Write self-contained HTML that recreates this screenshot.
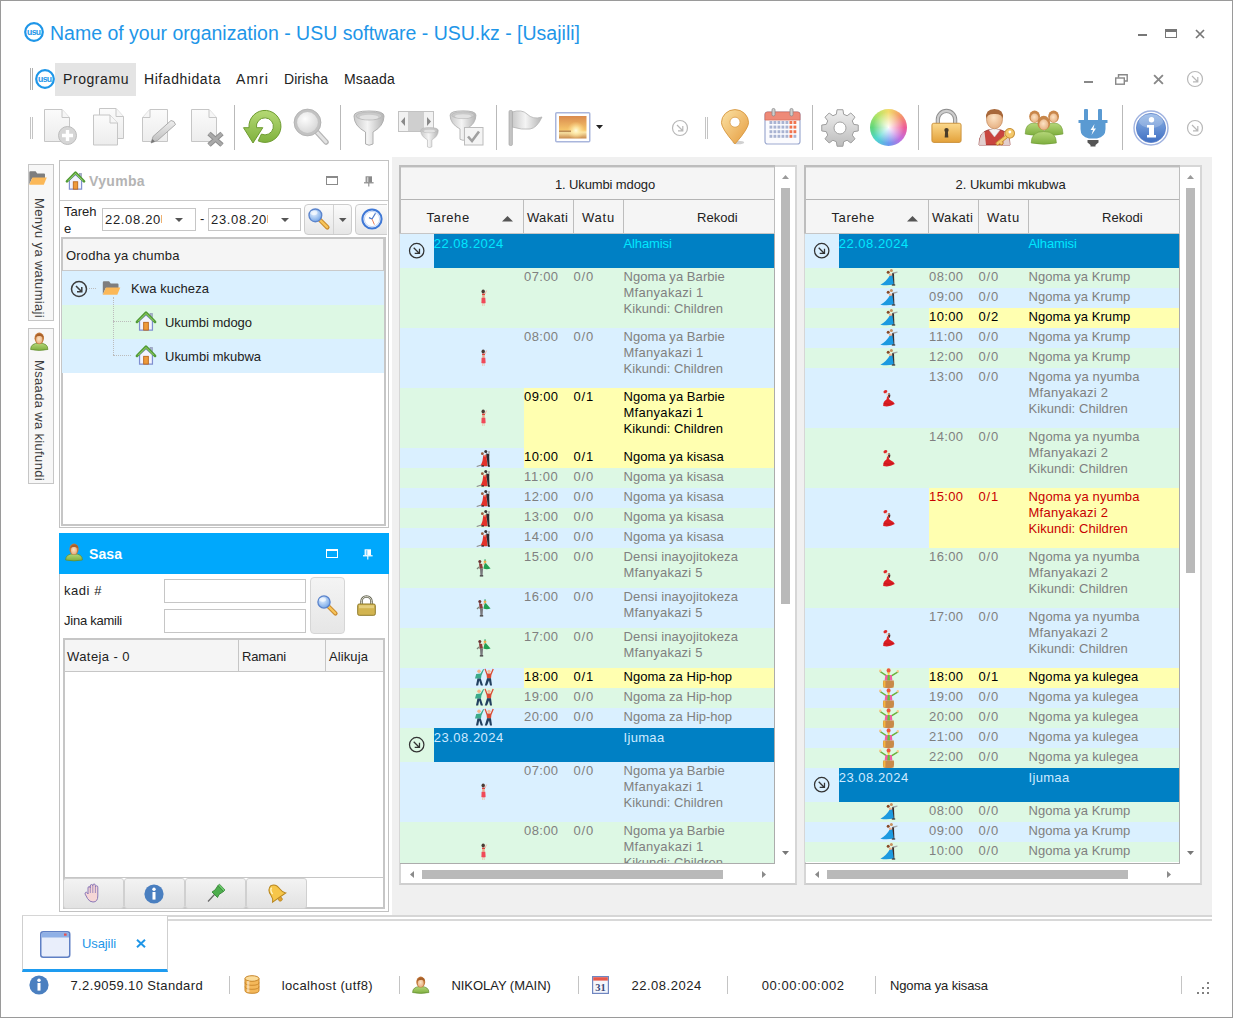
<!DOCTYPE html>
<html><head><meta charset="utf-8"><title>USU</title>
<style>
html,body{margin:0;padding:0;}
body{width:1233px;height:1018px;position:relative;overflow:hidden;background:#fff;font-family:"Liberation Sans", sans-serif;font-size:13px;color:#000;}
div{box-sizing:border-box;}
svg{position:absolute;overflow:visible;}
</style></head><body>
<svg width="0" height="0" style="left:0;top:0"><defs>
<linearGradient id="gPage" x1="0" y1="0" x2="0" y2="1"><stop offset="0" stop-color="#fbfbfb"/><stop offset="1" stop-color="#ececec"/></linearGradient>
<linearGradient id="gGray" x1="0" y1="0" x2="1" y2="0"><stop offset="0" stop-color="#c9c9c9"/><stop offset="0.45" stop-color="#f4f4f4"/><stop offset="1" stop-color="#b4b4b4"/></linearGradient>
<linearGradient id="gGrayV" x1="0" y1="0" x2="0" y2="1"><stop offset="0" stop-color="#efefef"/><stop offset="1" stop-color="#bcbcbc"/></linearGradient>
<linearGradient id="gGreen" x1="0" y1="0" x2="0" y2="1"><stop offset="0" stop-color="#b5d975"/><stop offset="1" stop-color="#7fb13d"/></linearGradient>
<linearGradient id="gGold" x1="0" y1="0" x2="0" y2="1"><stop offset="0" stop-color="#fbd98d"/><stop offset="1" stop-color="#e3a13a"/></linearGradient>
<linearGradient id="gPin" x1="0" y1="0" x2="1" y2="1"><stop offset="0" stop-color="#fbe3a6"/><stop offset="1" stop-color="#e59a3c"/></linearGradient>
<linearGradient id="gBlue" x1="0" y1="0" x2="0" y2="1"><stop offset="0" stop-color="#8fb4e6"/><stop offset="1" stop-color="#3f6fc2"/></linearGradient>
<linearGradient id="gSun" x1="0" y1="0" x2="0" y2="1"><stop offset="0" stop-color="#d98a4e"/><stop offset="0.62" stop-color="#f6c56a"/><stop offset="0.72" stop-color="#fbe6a8"/><stop offset="1" stop-color="#c98a4c"/></linearGradient>
<linearGradient id="gBtn" x1="0" y1="0" x2="0" y2="1"><stop offset="0" stop-color="#f8f8f8"/><stop offset="1" stop-color="#e2e2e2"/></linearGradient>
<radialGradient id="gLens" cx="0.4" cy="0.35" r="0.7"><stop offset="0" stop-color="#fdfdfd"/><stop offset="1" stop-color="#d2d2d2"/></radialGradient>
<radialGradient id="gLensB" cx="0.4" cy="0.35" r="0.7"><stop offset="0" stop-color="#e6f2ff"/><stop offset="1" stop-color="#6fa2e6"/></radialGradient>
<radialGradient id="gHead" cx="0.45" cy="0.4" r="0.7"><stop offset="0" stop-color="#fde3c4"/><stop offset="1" stop-color="#e2a878"/></radialGradient>
<linearGradient id="gBodyG" x1="0" y1="0" x2="0" y2="1"><stop offset="0" stop-color="#b6d77a"/><stop offset="1" stop-color="#7eae3e"/></linearGradient>
<radialGradient id="gGlow"><stop offset="0" stop-color="#fffbe0" stop-opacity="1"/><stop offset="0.35" stop-color="#ffeeb0" stop-opacity="0.8"/><stop offset="1" stop-color="#ffd888" stop-opacity="0"/></radialGradient>
<filter id="fB" x="-10%" y="-10%" width="120%" height="120%"><feGaussianBlur stdDeviation="0.35"/></filter>
</defs></svg>
<div style="position:absolute;left:0px;top:0px;width:1233px;height:1018px;border:1px solid #9a9a9a;background:#fff;"></div>
<div style="position:absolute;left:392px;top:157px;width:820px;height:760px;background:#f0f0f0;"></div>
<svg style="left:24px;top:22px" width="20" height="20" viewBox="0 0 20 20"><circle cx="10" cy="10" r="8.8" fill="#fff" stroke="#1e96e8" stroke-width="2.2"/><text x="9.7" y="13" font-family='"Liberation Sans", sans-serif' font-size="8.6" font-weight="bold" text-anchor="middle" fill="#1e96e8" letter-spacing="-0.7">usu</text></svg>
<div style="position:absolute;left:50px;top:19px;font-size:19.5px;line-height:28px;color:#1e96e8;white-space:pre;letter-spacing:0.001px;">Name of your organization - USU software - USU.kz - [Usajili]</div>
<div style="position:absolute;left:1138px;top:34px;width:9px;height:2px;background:#777;"></div>
<div style="position:absolute;left:1165px;top:29px;width:12px;height:9px;border:1px solid #777;border-top:3px solid #777;"></div>
<svg style="left:1195px;top:29px" width="10" height="10" viewBox="0 0 10 10"><path d="M1 1 L9 9 M9 1 L1 9" stroke="#777" stroke-width="1.7" fill="none"/></svg>
<div style="position:absolute;left:30px;top:68px;width:1px;height:22px;background:#b0b0b0;"></div>
<div style="position:absolute;left:32px;top:68px;width:1px;height:22px;background:#b0b0b0;"></div>
<svg style="left:35px;top:69px" width="20" height="20" viewBox="0 0 20 20"><circle cx="10" cy="10" r="8.8" fill="#fff" stroke="#1e96e8" stroke-width="2.2"/><text x="9.7" y="13" font-family='"Liberation Sans", sans-serif' font-size="8.6" font-weight="bold" text-anchor="middle" fill="#1e96e8" letter-spacing="-0.7">usu</text></svg>
<div style="position:absolute;left:55px;top:63px;width:81px;height:33px;background:#e4e4e4;"></div>
<div style="position:absolute;left:63px;top:70px;font-size:14px;line-height:18px;color:#222;white-space:pre;letter-spacing:0.566px;">Programu</div>
<div style="position:absolute;left:144px;top:70px;font-size:14px;line-height:18px;color:#222;white-space:pre;letter-spacing:0.561px;">Hifadhidata</div>
<div style="position:absolute;left:236px;top:70px;font-size:14px;line-height:18px;color:#222;white-space:pre;letter-spacing:1.055px;">Amri</div>
<div style="position:absolute;left:284px;top:70px;font-size:14px;line-height:18px;color:#222;white-space:pre;letter-spacing:0.060px;">Dirisha</div>
<div style="position:absolute;left:344px;top:70px;font-size:14px;line-height:18px;color:#222;white-space:pre;letter-spacing:0.198px;">Msaada</div>
<div style="position:absolute;left:1084px;top:81px;width:9px;height:2px;background:#888;"></div>
<svg style="left:1115px;top:74px" width="13" height="11" viewBox="0 0 13 11"><path d="M3.5 3.5 V0.8 H12.2 V7 H9.5" fill="none" stroke="#888" stroke-width="1.4"/><rect x="0.7" y="4" width="8.6" height="6.2" fill="#fff" stroke="#888" stroke-width="1.4"/></svg>
<svg style="left:1153px;top:74px" width="11" height="11" viewBox="0 0 10 10"><path d="M1 1 L9 9 M9 1 L1 9" stroke="#888" stroke-width="1.7" fill="none"/></svg>
<svg style="left:1186px;top:70px" width="18" height="18" viewBox="0 0 18 18"><circle cx="9" cy="9" r="7.5" fill="none" stroke="#b8b8b8" stroke-width="1.2"/><path d="M6 6 L11.5 11.5 M7 11.8 H11.8 V7" fill="none" stroke="#b8b8b8" stroke-width="1.2"/></svg>
<div style="position:absolute;left:30px;top:117px;width:1px;height:22px;background:#c4c4c4;"></div>
<div style="position:absolute;left:32px;top:117px;width:1px;height:22px;background:#c4c4c4;"></div>
<svg style="left:44px;top:109px" width="36" height="38" viewBox="0 0 36 38"><path d="M0.5 0.5 H18 L25.5 8.5 V32.5 H0.5 Z" fill="url(#gPage)" stroke="#c6c6c6" stroke-width="1"/><path d="M18 0.5 V8.5 H25.5" fill="#f6f6f6" stroke="#c6c6c6" stroke-width="1"/><circle cx="23.5" cy="26.5" r="9" fill="#d6d6d6" stroke="#bdbdbd"/><path d="M23.5 21 V32 M18 26.5 H29" stroke="#fff" stroke-width="3.4"/></svg>
<svg style="left:93px;top:107.5px" width="32" height="38" viewBox="0 0 32 38"><g transform="translate(6,0)"><path d="M0.5 0.5 H17 L24.5 8.5 V30.5 H0.5 Z" fill="url(#gPage)" stroke="#c6c6c6" stroke-width="1"/><path d="M17 0.5 V8.5 H24.5" fill="#f6f6f6" stroke="#c6c6c6" stroke-width="1"/></g><g transform="translate(0,6.5)"><path d="M0.5 0.5 H17 L24.5 8.5 V30.5 H0.5 Z" fill="url(#gPage)" stroke="#c6c6c6" stroke-width="1"/><path d="M17 0.5 V8.5 H24.5" fill="#f6f6f6" stroke="#c6c6c6" stroke-width="1"/></g></svg>
<svg style="left:142px;top:109px" width="36" height="38" viewBox="0 0 36 38"><path d="M8 0.5 H25.5 V32.5 H0.5 V8.5 Z" fill="url(#gPage)" stroke="#c6c6c6"/><path d="M8 0.5 V8.5 H0.5" fill="#f6f6f6" stroke="#c6c6c6"/><path d="M9 34 L11 27.5 L29 11.5 Q32.5 11.5 33.5 15.5 L15.5 31.5 Z" fill="url(#gGrayV)" stroke="#9c9c9c" stroke-width="0.8"/><path d="M9 34 L10.3 30 L13 32.6 Z" fill="#777"/></svg>
<svg style="left:191px;top:109px" width="36" height="38" viewBox="0 0 36 38"><path d="M0.5 0.5 H18 L25.5 8.5 V32.5 H0.5 Z" fill="url(#gPage)" stroke="#c6c6c6" stroke-width="1"/><path d="M18 0.5 V8.5 H25.5" fill="#f6f6f6" stroke="#c6c6c6" stroke-width="1"/><path d="M18 24.5 L31 36 M31 24.5 L18 36" stroke="#8e8e8e" stroke-width="5"/><path d="M18 24.5 L31 36 M31 24.5 L18 36" stroke="#a9a9a9" stroke-width="3"/></svg>
<div style="position:absolute;left:234px;top:105px;width:1px;height:45px;background:#b9b9b9;"></div>
<svg style="left:243px;top:110px" width="40" height="36" viewBox="0 0 40 36"><path d="M6 17.7 A16 16 0 1 1 15.2 30.9 L18.4 24.1 A8.5 8.5 0 1 0 13.5 17.7 L19.8 17.7 L10 33 L0.5 17.7 Z" fill="url(#gGreen)" stroke="#6e9c30" stroke-width="1" stroke-linejoin="round"/></svg>
<svg style="left:293px;top:108px" width="38" height="38" viewBox="0 0 38 38"><path d="M22 22 L33 34" stroke="#b5b5b5" stroke-width="5.5" stroke-linecap="round"/><path d="M22 22 L33 34" stroke="#e2e2e2" stroke-width="3" stroke-linecap="round"/><circle cx="14.5" cy="14.5" r="12" fill="url(#gLens)" stroke="#c2c2c2" stroke-width="3.2"/><circle cx="14.5" cy="14.5" r="13.4" fill="none" stroke="#b0b0b0" stroke-width="0.8"/></svg>
<div style="position:absolute;left:340px;top:105px;width:1px;height:45px;background:#b9b9b9;"></div>
<svg style="left:353px;top:109.5px" width="32" height="36" viewBox="0 0 32 36"><path d="M1 6 Q1 1 16 1 Q31 1 31 6 Q31 16 20 22 V34 Q16 36.5 12.5 34 V22 Q1 16 1 6 Z" fill="url(#gGray)" stroke="#b0b0b0" stroke-width="1"/><ellipse cx="16" cy="6" rx="13" ry="4" fill="#cacaca" stroke="#b4b4b4" stroke-width="0.8"/><ellipse cx="16" cy="7.2" rx="9.5" ry="2.4" fill="#e2e2e2"/></svg>
<svg style="left:398px;top:111px" width="40" height="22" viewBox="0 0 40 22"><rect x="0.5" y="0.5" width="35" height="20" fill="#f2f2f2" stroke="#c2c2c2"/><rect x="10" y="1" width="16" height="19" fill="#cfcfcf"/><path d="M7 6 V15 L3 10.5 Z M29 6 V15 L33 10.5 Z" fill="#8a8a8a"/></svg>
<svg style="left:420px;top:127px" width="19" height="21" viewBox="0 0 32 36"><path d="M1 6 Q1 1 16 1 Q31 1 31 6 Q31 16 20 22 V34 Q16 36.5 12.5 34 V22 Q1 16 1 6 Z" fill="url(#gGray)" stroke="#b0b0b0" stroke-width="1"/><ellipse cx="16" cy="6" rx="13" ry="4" fill="#cacaca" stroke="#b4b4b4" stroke-width="0.8"/><ellipse cx="16" cy="7.2" rx="9.5" ry="2.4" fill="#e2e2e2"/></svg>
<svg style="left:449px;top:109.5px" width="28" height="31" viewBox="0 0 32 36"><path d="M1 6 Q1 1 16 1 Q31 1 31 6 Q31 16 20 22 V34 Q16 36.5 12.5 34 V22 Q1 16 1 6 Z" fill="url(#gGray)" stroke="#b0b0b0" stroke-width="1"/><ellipse cx="16" cy="6" rx="13" ry="4" fill="#cacaca" stroke="#b4b4b4" stroke-width="0.8"/><ellipse cx="16" cy="7.2" rx="9.5" ry="2.4" fill="#e2e2e2"/></svg>
<svg style="left:464px;top:126.5px" width="20" height="19" viewBox="0 0 20 19"><rect x="0.5" y="0.5" width="18.5" height="17.5" fill="#f4f4f4" stroke="#bcbcbc"/><path d="M4 9.5 L8 14 L15 4.5" fill="none" stroke="#a0a0a0" stroke-width="2.6"/></svg>
<div style="position:absolute;left:496px;top:105px;width:1px;height:45px;background:#b9b9b9;"></div>
<svg style="left:508px;top:110px" width="36" height="36" viewBox="0 0 36 36"><path d="M4 2 Q14 -1 19 4 Q25 10 34 7 Q29 18 22 19 Q14 20 4 17 Z" fill="url(#gGray)" stroke="#b4b4b4" stroke-width="0.8"/><rect x="1" y="0.5" width="3.4" height="35" rx="1.2" fill="#c4c4c4" stroke="#a8a8a8" stroke-width="0.7"/></svg>
<svg style="left:555px;top:112px" width="36" height="31" viewBox="0 0 36 31"><rect x="0.75" y="0.75" width="34" height="29" rx="1" fill="#fff" stroke="#a9b6dc" stroke-width="1.5"/><rect x="4" y="4" width="27.5" height="22.5" fill="url(#gSun)"/><circle cx="21" cy="18.5" r="9" fill="url(#gGlow)"/><rect x="4" y="18.5" width="12" height="1.6" fill="#a06a3a" opacity="0.7"/></svg>
<svg style="left:596px;top:124.5px" width="7" height="4" viewBox="0 0 7 4"><path d="M0 0 H7 L3.5 4 Z" fill="#222"/></svg>
<svg style="left:671px;top:119px" width="18" height="18" viewBox="0 0 18 18"><circle cx="9" cy="9" r="7.5" fill="none" stroke="#b8b8b8" stroke-width="1.2"/><path d="M6 6 L11.5 11.5 M7 11.8 H11.8 V7" fill="none" stroke="#b8b8b8" stroke-width="1.2"/></svg>
<div style="position:absolute;left:705px;top:117px;width:1px;height:22px;background:#c4c4c4;"></div>
<div style="position:absolute;left:707px;top:117px;width:1px;height:22px;background:#c4c4c4;"></div>
<svg style="left:720px;top:110px" width="30" height="35" viewBox="0 0 31 36"><ellipse cx="19" cy="33.5" rx="6" ry="1.8" fill="#000" opacity="0.18"/><path d="M15.5 35 Q1.5 19 1.5 13 A14 13.5 0 0 1 29.5 13 Q29.5 19 15.5 35 Z" fill="url(#gPin)" stroke="#d89a45" stroke-width="1"/><circle cx="15.5" cy="12.5" r="5.2" fill="#fff" stroke="#d89a45" stroke-width="0.8"/></svg>
<svg style="left:764px;top:108px" width="38" height="37" viewBox="0 0 38 37"><rect x="1" y="4" width="35" height="32" rx="2.5" fill="#fbfbfe" stroke="#9daad0" stroke-width="1.2"/><path d="M1 12 V6.5 Q1 4 3.5 4 H33.5 Q36 4 36 6.5 V12 Z" fill="#ee8a78" stroke="#d9705e" stroke-width="0.8"/><rect x="5.5" y="13.0" width="2.8" height="3" fill="#a9b3d2"/><rect x="9.5" y="13.0" width="2.8" height="3" fill="#a9b3d2"/><rect x="13.5" y="13.0" width="2.8" height="3" fill="#a9b3d2"/><rect x="17.5" y="13.0" width="2.8" height="3" fill="#a9b3d2"/><rect x="21.5" y="13.0" width="2.8" height="3" fill="#a9b3d2"/><rect x="25.5" y="13.0" width="2.8" height="3" fill="#f0734f"/><rect x="29.5" y="13.0" width="2.8" height="3" fill="#f0734f"/><rect x="5.5" y="17.6" width="2.8" height="3" fill="#a9b3d2"/><rect x="9.5" y="17.6" width="2.8" height="3" fill="#a9b3d2"/><rect x="13.5" y="17.6" width="2.8" height="3" fill="#a9b3d2"/><rect x="17.5" y="17.6" width="2.8" height="3" fill="#a9b3d2"/><rect x="21.5" y="17.6" width="2.8" height="3" fill="#a9b3d2"/><rect x="25.5" y="17.6" width="2.8" height="3" fill="#f0734f"/><rect x="29.5" y="17.6" width="2.8" height="3" fill="#f0734f"/><rect x="5.5" y="22.2" width="2.8" height="3" fill="#a9b3d2"/><rect x="9.5" y="22.2" width="2.8" height="3" fill="#a9b3d2"/><rect x="13.5" y="22.2" width="2.8" height="3" fill="#a9b3d2"/><rect x="17.5" y="22.2" width="2.8" height="3" fill="#a9b3d2"/><rect x="21.5" y="22.2" width="2.8" height="3" fill="#a9b3d2"/><rect x="25.5" y="22.2" width="2.8" height="3" fill="#f0734f"/><rect x="29.5" y="22.2" width="2.8" height="3" fill="#f0734f"/><rect x="5.5" y="26.799999999999997" width="2.8" height="3" fill="#a9b3d2"/><rect x="9.5" y="26.799999999999997" width="2.8" height="3" fill="#a9b3d2"/><rect x="13.5" y="26.799999999999997" width="2.8" height="3" fill="#a9b3d2"/><rect x="17.5" y="26.799999999999997" width="2.8" height="3" fill="#a9b3d2"/><rect x="21.5" y="26.799999999999997" width="2.8" height="3" fill="#a9b3d2"/><rect x="25.5" y="26.799999999999997" width="2.8" height="3" fill="#f0734f"/><rect x="29.5" y="26.799999999999997" width="2.8" height="3" fill="#a9b3d2"/><rect x="8" y="0.5" width="3" height="7.5" rx="1.4" fill="#cfcfcf" stroke="#8a8a8a" stroke-width="0.8"/><rect x="26" y="0.5" width="3" height="7.5" rx="1.4" fill="#cfcfcf" stroke="#8a8a8a" stroke-width="0.8"/></svg>
<div style="position:absolute;left:812px;top:105px;width:1px;height:45px;background:#b9b9b9;"></div>
<svg style="left:821px;top:109px" width="38" height="38" viewBox="0 0 38 38"><path d="M15.35 5.28 L16.05 0.74 L21.95 0.74 L22.65 5.28 L26.12 6.72 L29.83 4.00 L34.00 8.17 L31.28 11.88 L32.72 15.35 L37.26 16.05 L37.26 21.95 L32.72 22.65 L31.28 26.12 L34.00 29.83 L29.83 34.00 L26.12 31.28 L22.65 32.72 L21.95 37.26 L16.05 37.26 L15.35 32.72 L11.88 31.28 L8.17 34.00 L4.00 29.83 L6.72 26.12 L5.28 22.65 L0.74 21.95 L0.74 16.05 L5.28 15.35 L6.72 11.88 L4.00 8.17 L8.17 4.00 L11.88 6.72 Z" fill="url(#gGrayV)" stroke="#9e9e9e" stroke-width="1" stroke-linejoin="round"/><circle cx="19" cy="19" r="6" fill="#fff" stroke="#a4a4a4" stroke-width="1"/></svg>
<div style="position:absolute;left:870px;top:109px;width:37px;height:37px;border-radius:50%;background:radial-gradient(circle at 50% 50%, rgba(255,255,255,0.95) 0%, rgba(255,255,255,0.55) 26%, rgba(255,255,255,0) 60%),conic-gradient(from 0deg,#f2dc6a,#f49a6a,#ee5c98,#c070e0,#6a9af0,#50d6d0,#5fd67a,#b0e468,#f2dc6a);"></div>
<div style="position:absolute;left:918px;top:105px;width:1px;height:45px;background:#b9b9b9;"></div>
<svg style="left:931px;top:108px" width="31" height="36" viewBox="0 0 34 37"><path d="M7.5 16 V11.5 A9.5 9.5 0 0 1 26.5 11.5 V16" fill="none" stroke="#8e8e8e" stroke-width="4.6"/><path d="M7.5 16 V11.5 A9.5 9.5 0 0 1 26.5 11.5 V16" fill="none" stroke="#cdcdcd" stroke-width="2.6"/><rect x="1" y="15.5" width="32" height="21" rx="2" fill="url(#gGold)" stroke="#c98e36" stroke-width="1"/><circle cx="17" cy="23" r="2.4" fill="#4a3c28"/><path d="M15.6 23 H18.4 L19 31 H15 Z" fill="#4a3c28"/></svg>
<svg style="left:978px;top:108px" width="40" height="38" viewBox="0 0 40 38"><path d="M1 37 Q1 24 10 22 L16.5 21 L23 22 Q32 24 32 37 Z" fill="#c9453f" stroke="#8e2f2c" stroke-width="0.8"/><path d="M11 22 L16.5 29 L22 22 L16.5 20.5 Z" fill="#f4f4f4" stroke="#c9c9c9" stroke-width="0.5"/><path d="M1 37 Q1.5 26 6.5 23.5 L8 37 Z M32 37 Q31.5 26 26.5 23.5 L25 37 Z" fill="#e8e8e8" opacity="0.85"/><ellipse cx="16.5" cy="11.5" rx="8" ry="9.3" fill="url(#gHead)" stroke="#c48a5c" stroke-width="0.7"/><path d="M8 11 Q7 1 16.5 1 Q26 1 25 11 Q23.5 5.5 16.5 6 Q9.5 5.5 8 11 Z" fill="#a8683a"/><g transform="translate(21,22) rotate(-38 8 8)"><circle cx="13" cy="6" r="4.8" fill="#f4c86a" stroke="#c8923a" stroke-width="1"/><circle cx="14" cy="5" r="1.4" fill="#fff"/><path d="M8.5 5 H-4 V8 H-1 V10 H2 V8 H8.5 Z" fill="#f4c86a" stroke="#c8923a" stroke-width="0.9"/></g></svg>
<svg style="left:1025px;top:109.5px" width="40" height="36" viewBox="0 0 40 36"><path d="M0.1999999999999993 24 Q0.1999999999999993 13.0 9.6 13.0 Q19.0 13.0 19.0 24 Q9.6 26.5 0.1999999999999993 24 Z" fill="url(#gBodyG)" stroke="#6f9a35" stroke-width="0.6"/><ellipse cx="9.6" cy="6.6" rx="5.4" ry="6.048000000000001" fill="#c8864a"/><ellipse cx="9.6" cy="7.949999999999999" rx="3.888" ry="4.428" fill="url(#gHead)"/><path d="M19.200000000000003 24 Q19.200000000000003 13.0 28.6 13.0 Q38.0 13.0 38.0 24 Q28.6 26.5 19.200000000000003 24 Z" fill="url(#gBodyG)" stroke="#6f9a35" stroke-width="0.6"/><ellipse cx="28.6" cy="6.6" rx="5.4" ry="6.048000000000001" fill="#c8864a"/><ellipse cx="28.6" cy="7.949999999999999" rx="3.888" ry="4.428" fill="url(#gHead)"/><path d="M6.200000000000001 33 Q6.200000000000001 21.5 18.8 21.5 Q31.4 21.5 31.4 33 Q18.8 35.5 6.200000000000001 33 Z" fill="url(#gBodyG)" stroke="#6f9a35" stroke-width="0.6"/><ellipse cx="18.8" cy="13" rx="6.4" ry="7.168000000000001" fill="#c8864a"/><ellipse cx="18.8" cy="14.6" rx="4.608" ry="5.248" fill="url(#gHead)"/></svg>
<svg style="left:1078px;top:109px" width="30" height="38" viewBox="0 0 30 38"><rect x="6" y="0" width="4" height="13" rx="1" fill="#5a9ad2"/><rect x="20" y="0" width="4" height="13" rx="1" fill="#5a9ad2"/><path d="M0.5 11 H29.5 V14 H27.5 V20 Q27.5 28 19 29.5 H11 Q2.5 28 2.5 20 V14 H0.5 Z" fill="#5a9ad2"/><path d="M16.5 15 L12.5 21 H15 L13.5 26 L18 19.5 H15.5 Z" fill="#fff"/><path d="M9.5 31 H20.5 V33.5 L17.5 36 V37.5 H12.5 V36 L9.5 33.5 Z" fill="#555"/></svg>
<div style="position:absolute;left:1122px;top:105px;width:1px;height:45px;background:#b9b9b9;"></div>
<svg style="left:1133px;top:110px" width="36" height="36" viewBox="0 0 36 36"><circle cx="18" cy="18" r="17" fill="#fff" stroke="#9fb2e0" stroke-width="1.4"/><circle cx="18" cy="18" r="14.6" fill="url(#gBlue)" stroke="#5a7fc8" stroke-width="0.8"/><ellipse cx="18" cy="11" rx="12" ry="7" fill="#fff" opacity="0.22"/><circle cx="18.5" cy="9.8" r="2.7" fill="#fff"/><path d="M14 15 H21 V25 H23 V27.5 H14 V25 H16 V17.5 H14 Z" fill="#fff"/></svg>
<svg style="left:1186px;top:119px" width="18" height="18" viewBox="0 0 18 18"><circle cx="9" cy="9" r="7.5" fill="none" stroke="#b8b8b8" stroke-width="1.2"/><path d="M6 6 L11.5 11.5 M7 11.8 H11.8 V7" fill="none" stroke="#b8b8b8" stroke-width="1.2"/></svg>
<div style="position:absolute;left:28px;top:164px;width:26px;height:157px;border:1px solid #c6c6c6;background:#f7f7f7;"></div>
<svg style="left:29px;top:171px" width="18" height="14" viewBox="0 0 18 14"><path d="M0.3 13.5 V1.4 Q0.3 0.3 1.4 0.3 H6.6 L8.2 2.4 H15 Q16 2.4 16 3.4 V7 H3.2 Z" fill="#7e7e7e"/><path d="M0.3 13.7 L3.4 6.6 H17.8 L14.8 13.7 Z" fill="#fbb858"/></svg>
<div style="position:absolute;left:47px;top:198px;font-size:13px;line-height:16px;color:#3c3c3c;white-space:pre;letter-spacing:0.325px;transform-origin:0 0;transform:rotate(90deg);">Menyu ya watumiaji</div>
<div style="position:absolute;left:28px;top:328px;width:26px;height:156px;border:1px solid #c6c6c6;background:#f7f7f7;"></div>
<svg style="left:30px;top:331.5px" width="18.5" height="18.5" viewBox="0 0 18 18"><path d="M0.6 17 Q0.6 10.8 9 10.8 Q17.4 10.8 17.4 17 Q9 18.8 0.6 17 Z" fill="url(#gBodyG)" stroke="#5f8a2c" stroke-width="0.7"/><ellipse cx="9" cy="6.2" rx="4.6" ry="5.6" fill="#c47a3c"/><ellipse cx="9" cy="7.4" rx="3" ry="3.9" fill="url(#gHead)"/><path d="M5 5.4 Q6 1.4 9.4 1.6 Q13 1.8 13.4 5.6 Q11.4 3.6 9 4 Q6.4 4 5 5.4 Z" fill="#a8602a"/></svg>
<div style="position:absolute;left:47px;top:359.5px;font-size:13px;line-height:16px;color:#3c3c3c;white-space:pre;letter-spacing:0.339px;transform-origin:0 0;transform:rotate(90deg);">Msaada wa kiufundi</div>
<div style="position:absolute;left:59px;top:160px;width:330px;height:368px;border:1px solid #c2c2c2;background:#fff;"></div>
<div style="position:absolute;left:60px;top:200px;width:328px;height:1px;background:#c8c8c8;"></div>
<svg style="left:66px;top:171px" width="19" height="19" viewBox="0 0 18 18"><path d="M3.2 8.6 V17.2 H14.8 V8.6 L9 3.4 Z" fill="#f2f3fd" stroke="#7f8fd0" stroke-width="1.1"/><rect x="6.9" y="10.2" width="4.2" height="7" fill="#ee9a3a" stroke="#b8641a" stroke-width="0.8"/><rect x="12.6" y="2.2" width="2.2" height="4.6" fill="#a9b2cc" stroke="#8890b0" stroke-width="0.5"/><path d="M0.9 9.8 L9 1.5 L17.1 9.8" fill="none" stroke="#4f9a34" stroke-width="2.5" stroke-linejoin="round" stroke-linecap="round"/><path d="M2 9.2 L9 2.2 L16 9.2" fill="none" stroke="#a6d872" stroke-width="0.9"/></svg>
<div style="position:absolute;left:89px;top:172px;font-size:14px;line-height:18px;color:#b4b4b4;white-space:pre;font-weight:bold;letter-spacing:0.341px;">Vyumba</div>
<div style="position:absolute;left:326px;top:176px;width:12px;height:9px;border:1px solid #8a8a8a;border-top:2px solid #8a8a8a;"></div>
<svg style="left:363.8px;top:176.2px" width="10" height="11" viewBox="0 0 10 11"><rect x="1.6" y="0.3" width="6.4" height="6.2" fill="#8a8a8a"/><rect x="2.8" y="1.2" width="1.6" height="5" fill="#d0d0d0"/><path d="M0 6.8 H9.6" stroke="#8a8a8a" stroke-width="1.2"/><path d="M4.8 7 V10.6" stroke="#8a8a8a" stroke-width="1.1"/></svg>
<div style="position:absolute;left:64px;top:204px;font-size:13px;line-height:16px;color:#222;white-space:pre;">Tareh</div>
<div style="position:absolute;left:64px;top:221px;font-size:13px;line-height:16px;color:#222;white-space:pre;">e</div>
<div style="position:absolute;left:102px;top:208px;width:94px;height:23px;border:1px solid #c6c6c6;background:#fff;"></div>
<div style="position:absolute;left:105px;top:212px;font-size:13px;line-height:16px;color:#222;white-space:pre;letter-spacing:0.674px;">22.08.20</div>
<svg style="left:175px;top:218px" width="8" height="4" viewBox="0 0 8 4"><path d="M0 0 H8 L4 4 Z" fill="#555"/></svg>
<div style="position:absolute;left:200px;top:211px;font-size:13px;line-height:16px;color:#222;white-space:pre;">-</div>
<div style="position:absolute;left:208px;top:208px;width:93px;height:23px;border:1px solid #c6c6c6;background:#fff;"></div>
<div style="position:absolute;left:211px;top:212px;font-size:13px;line-height:16px;color:#222;white-space:pre;letter-spacing:0.674px;">23.08.20</div>
<svg style="left:281px;top:218px" width="8" height="4" viewBox="0 0 8 4"><path d="M0 0 H8 L4 4 Z" fill="#555"/></svg>
<div style="position:absolute;left:161px;top:215px;width:1px;height:8px;background:#f0b070;"></div>
<div style="position:absolute;left:267px;top:215px;width:1px;height:8px;background:#f0b070;"></div>
<div style="position:absolute;left:304px;top:204px;width:48px;height:31px;border:1px solid #cdcdcd;border-radius:4px;background:linear-gradient(#fbfbfb,#e6e6e6);"></div>
<div style="position:absolute;left:333px;top:205px;width:1px;height:29px;background:#d2d2d2;"></div>
<svg style="left:307px;top:207px" width="23" height="23" viewBox="0 0 22 22"><path d="M12 12 L19.5 19.5" stroke="#c98a2e" stroke-width="4.2" stroke-linecap="round"/><path d="M12.3 12.3 L19.3 19.3" stroke="#f7c45a" stroke-width="2.2" stroke-linecap="round"/><circle cx="8" cy="8" r="6.1" fill="url(#gLensB)" stroke="#5b84cc" stroke-width="1.3"/><ellipse cx="6.6" cy="5.6" rx="3.4" ry="2.2" fill="#fff" opacity="0.6"/></svg>
<svg style="left:338.5px;top:218px" width="7.5" height="4" viewBox="0 0 7.5 4"><path d="M0 0 H7.5 L3.75 4 Z" fill="#555"/></svg>
<div style="position:absolute;left:355px;top:204px;width:32px;height:31px;overflow:hidden;"><div style="position:absolute;left:0;top:0;width:40px;height:31px;border:1px solid #cdcdcd;border-radius:4px;background:linear-gradient(#fbfbfb,#e6e6e6);"></div></div>
<svg style="left:361px;top:207.5px" width="22" height="22" viewBox="0 0 22 22"><circle cx="11" cy="11" r="9.6" fill="#f4f8ff" stroke="#3f78d6" stroke-width="2"/><circle cx="11" cy="11" r="7.6" fill="#ffffff" stroke="#b7cdf2" stroke-width="0.8"/><path d="M11 11 L14.5 5.2" stroke="#4a76c8" stroke-width="1.2"/><path d="M11 11 L8 9.6" stroke="#4a76c8" stroke-width="1.2"/><path d="M11 11 L13.4 16.6" stroke="#e8734a" stroke-width="0.9"/></svg>
<div style="position:absolute;left:61px;top:237px;width:325px;height:289px;border:2px solid #c6c6c6;background:#fff;"></div>
<div style="position:absolute;left:63px;top:239px;width:321px;height:32px;background:#f5f5f5;border-bottom:1px solid #cacaca;border-right:1px solid #cacaca;"></div>
<div style="position:absolute;left:66px;top:248px;font-size:13px;line-height:16px;color:#222;white-space:pre;letter-spacing:0.189px;">Orodha ya chumba</div>
<div style="position:absolute;left:62px;top:271px;width:322px;height:34px;background:#daf0ff;"></div>
<div style="position:absolute;left:62px;top:305px;width:322px;height:34px;background:#ddf8e4;"></div>
<div style="position:absolute;left:62px;top:339px;width:322px;height:34px;background:#daf0ff;"></div>
<svg style="left:70px;top:279.5px" width="18" height="18" viewBox="0 0 18 18"><circle cx="9" cy="9" r="7.5" fill="none" stroke="#3c3c3c" stroke-width="1.5"/><path d="M6 6 L11.5 11.5 M7 11.8 H11.8 V7" fill="none" stroke="#3c3c3c" stroke-width="1.5"/></svg>
<svg style="left:102px;top:281px" width="19" height="14" viewBox="0 0 18 14"><path d="M0.3 13.5 V1.4 Q0.3 0.3 1.4 0.3 H6.6 L8.2 2.4 H15 Q16 2.4 16 3.4 V7 H3.2 Z" fill="#7e7e7e"/><path d="M0.3 13.7 L3.4 6.6 H17.8 L14.8 13.7 Z" fill="#fbb858"/></svg>
<div style="position:absolute;left:131px;top:281px;font-size:13px;line-height:16px;color:#222;white-space:pre;letter-spacing:0.061px;">Kwa kucheza</div>
<svg style="left:136px;top:311px" width="20" height="20" viewBox="0 0 18 18"><path d="M3.2 8.6 V17.2 H14.8 V8.6 L9 3.4 Z" fill="#f2f3fd" stroke="#7f8fd0" stroke-width="1.1"/><rect x="6.9" y="10.2" width="4.2" height="7" fill="#ee9a3a" stroke="#b8641a" stroke-width="0.8"/><rect x="12.6" y="2.2" width="2.2" height="4.6" fill="#a9b2cc" stroke="#8890b0" stroke-width="0.5"/><path d="M0.9 9.8 L9 1.5 L17.1 9.8" fill="none" stroke="#4f9a34" stroke-width="2.5" stroke-linejoin="round" stroke-linecap="round"/><path d="M2 9.2 L9 2.2 L16 9.2" fill="none" stroke="#a6d872" stroke-width="0.9"/></svg>
<div style="position:absolute;left:165px;top:315px;font-size:13px;line-height:16px;color:#222;white-space:pre;letter-spacing:-0.036px;">Ukumbi mdogo</div>
<svg style="left:136px;top:345px" width="20" height="20" viewBox="0 0 18 18"><path d="M3.2 8.6 V17.2 H14.8 V8.6 L9 3.4 Z" fill="#f2f3fd" stroke="#7f8fd0" stroke-width="1.1"/><rect x="6.9" y="10.2" width="4.2" height="7" fill="#ee9a3a" stroke="#b8641a" stroke-width="0.8"/><rect x="12.6" y="2.2" width="2.2" height="4.6" fill="#a9b2cc" stroke="#8890b0" stroke-width="0.5"/><path d="M0.9 9.8 L9 1.5 L17.1 9.8" fill="none" stroke="#4f9a34" stroke-width="2.5" stroke-linejoin="round" stroke-linecap="round"/><path d="M2 9.2 L9 2.2 L16 9.2" fill="none" stroke="#a6d872" stroke-width="0.9"/></svg>
<div style="position:absolute;left:165px;top:349px;font-size:13px;line-height:16px;color:#222;white-space:pre;letter-spacing:-0.007px;">Ukumbi mkubwa</div>
<div style="position:absolute;left:112.5px;top:297px;width:1px;height:58px;border-left:1px dotted #bcbcbc;"></div>
<div style="position:absolute;left:113px;top:320.5px;width:18px;height:1px;border-top:1px dotted #bcbcbc;"></div>
<div style="position:absolute;left:113px;top:354.5px;width:18px;height:1px;border-top:1px dotted #bcbcbc;"></div>
<div style="position:absolute;left:89px;top:288px;width:7px;height:1px;border-top:1px dotted #bcbcbc;"></div>
<div style="position:absolute;left:59px;top:533px;width:330px;height:379px;border:1px solid #c2c2c2;background:#fff;"></div>
<div style="position:absolute;left:59px;top:533px;width:330px;height:41px;background:#00a8fc;"></div>
<svg style="left:65px;top:543px" width="18" height="18" viewBox="0 0 18 18"><path d="M0.6 17 Q0.6 10.8 9 10.8 Q17.4 10.8 17.4 17 Q9 18.8 0.6 17 Z" fill="url(#gBodyG)" stroke="#5f8a2c" stroke-width="0.7"/><ellipse cx="9" cy="6.2" rx="4.6" ry="5.6" fill="#c47a3c"/><ellipse cx="9" cy="7.4" rx="3" ry="3.9" fill="url(#gHead)"/><path d="M5 5.4 Q6 1.4 9.4 1.6 Q13 1.8 13.4 5.6 Q11.4 3.6 9 4 Q6.4 4 5 5.4 Z" fill="#a8602a"/></svg>
<div style="position:absolute;left:89px;top:545px;font-size:14px;line-height:18px;color:#fff;white-space:pre;font-weight:bold;letter-spacing:0.074px;">Sasa</div>
<div style="position:absolute;left:326px;top:549px;width:12px;height:9px;border:1px solid #fff;border-top:2px solid #fff;"></div>
<svg style="left:363.2px;top:548.8px" width="10" height="11" viewBox="0 0 10 11"><rect x="1.6" y="0.3" width="6.4" height="6.2" fill="#fff"/><rect x="2.8" y="1.2" width="1.6" height="5" fill="#7fd0ff"/><path d="M0 6.8 H9.6" stroke="#fff" stroke-width="1.2"/><path d="M4.8 7 V10.6" stroke="#fff" stroke-width="1.1"/></svg>
<div style="position:absolute;left:64px;top:583px;font-size:13px;line-height:16px;color:#222;white-space:pre;letter-spacing:0.549px;">kadi #</div>
<div style="position:absolute;left:64px;top:613px;font-size:13px;line-height:16px;color:#222;white-space:pre;letter-spacing:-0.244px;">Jina kamili</div>
<div style="position:absolute;left:164px;top:579px;width:142px;height:24px;border:1px solid #c6c6c6;background:#fff;"></div>
<div style="position:absolute;left:164px;top:609px;width:142px;height:24px;border:1px solid #c6c6c6;background:#fff;"></div>
<div style="position:absolute;left:310px;top:577px;width:35px;height:57px;border:1px solid #d6d6d6;border-radius:4px;background:linear-gradient(#f4f4f4,#e6e6e6);"></div>
<svg style="left:316px;top:594px" width="22" height="22" viewBox="0 0 22 22"><path d="M12 12 L19.5 19.5" stroke="#c98a2e" stroke-width="4.2" stroke-linecap="round"/><path d="M12.3 12.3 L19.3 19.3" stroke="#f7c45a" stroke-width="2.2" stroke-linecap="round"/><circle cx="8" cy="8" r="6.1" fill="url(#gLensB)" stroke="#5b84cc" stroke-width="1.3"/><ellipse cx="6.6" cy="5.6" rx="3.4" ry="2.2" fill="#fff" opacity="0.6"/></svg>
<svg style="left:357px;top:594.5px" width="19" height="21" viewBox="0 0 19 21"><path d="M4.5 9.5 V6.5 A5 5 0 0 1 14.5 6.5 V9.5" fill="none" stroke="#6a6a5a" stroke-width="2.6"/><path d="M4.5 9.5 V6.5 A5 5 0 0 1 14.5 6.5 V9.5" fill="none" stroke="#d8d8c8" stroke-width="1"/><rect x="0.7" y="9" width="17.6" height="11.3" rx="1.5" fill="#d2b450" stroke="#8e7a2a" stroke-width="1"/><rect x="2" y="10.2" width="15" height="3" fill="#e8d488" opacity="0.8"/></svg>
<div style="position:absolute;left:63px;top:638px;width:322px;height:271px;border:2px solid #c6c6c6;background:#fff;"></div>
<div style="position:absolute;left:65px;top:640px;width:318px;height:32px;background:#f5f5f5;border-bottom:1px solid #c6c6c6;"></div>
<div style="position:absolute;left:238px;top:640px;width:1px;height:32px;background:#c6c6c6;"></div>
<div style="position:absolute;left:325px;top:640px;width:1px;height:32px;background:#c6c6c6;"></div>
<div style="position:absolute;left:67px;top:649px;font-size:13px;line-height:16px;color:#222;white-space:pre;letter-spacing:0.423px;">Wateja - 0</div>
<div style="position:absolute;left:242px;top:649px;font-size:13px;line-height:16px;color:#222;white-space:pre;letter-spacing:-0.133px;">Ramani</div>
<div style="position:absolute;left:329px;top:649px;font-size:13px;line-height:16px;color:#222;white-space:pre;letter-spacing:0.100px;">Alikuja</div>
<div style="position:absolute;left:65px;top:877px;width:318px;height:1px;background:#c6c6c6;"></div>
<div style="position:absolute;left:63px;top:878px;width:61px;height:31px;border:1px solid #d0d0d0;border-radius:3px;background:linear-gradient(#f3f3f3,#e2e2e2);"></div>
<div style="position:absolute;left:124px;top:878px;width:61px;height:31px;border:1px solid #d0d0d0;border-radius:3px;background:linear-gradient(#f3f3f3,#e2e2e2);"></div>
<div style="position:absolute;left:185px;top:878px;width:61px;height:31px;border:1px solid #d0d0d0;border-radius:3px;background:linear-gradient(#f3f3f3,#e2e2e2);"></div>
<div style="position:absolute;left:246px;top:878px;width:61px;height:31px;border:1px solid #d0d0d0;border-radius:3px;background:linear-gradient(#f3f3f3,#e2e2e2);"></div>
<svg style="left:84px;top:883px" width="18" height="20" viewBox="0 0 18 20"><path d="M4 11 V5 Q4 3.6 5.2 3.6 Q6.3 3.6 6.3 5 V3 Q6.3 1.5 7.6 1.5 Q8.8 1.5 8.8 3 V2.6 Q8.8 1 10.1 1 Q11.4 1 11.4 2.6 V4 Q11.4 2.8 12.6 2.8 Q13.8 2.8 13.8 4.2 V13 Q13.8 19 9 19 Q5.5 19 3.5 15.5 L1.2 11.2 Q0.6 9.8 1.8 9.3 Q2.9 9 3.5 10 Z" fill="#f6d6d6" stroke="#8a78b8" stroke-width="1"/><path d="M6.3 5 V10 M8.8 3 V10 M11.4 4 V10" stroke="#8a78b8" stroke-width="0.8"/></svg>
<svg style="left:144px;top:883.5px" width="20" height="20" viewBox="0 0 20 20"><circle cx="10" cy="10" r="9.6" fill="#4a7fc0"/><circle cx="10" cy="5.3" r="1.7" fill="#fff"/><rect x="8.5" y="8" width="3" height="7.6" fill="#fff"/></svg>
<svg style="left:206px;top:883px" width="20" height="20" viewBox="0 0 20 20"><path d="M2 18.5 L8.5 11.5" stroke="#666" stroke-width="1.2"/><path d="M6 9 L11.5 14.5 L13 11.5 L17.5 8.5 L12 2.5 L9 7 Z" fill="#4eae4e" stroke="#2e7e2e" stroke-width="0.8"/><path d="M12 2.5 L17.5 8.5 L19 7 L13.5 1.2 Z" fill="#6ecf6e" stroke="#2e7e2e" stroke-width="0.7"/></svg>
<svg style="left:265px;top:882px" width="22" height="22" viewBox="0 0 22 22"><g transform="rotate(-35 11 11)"><path d="M11 2 Q16.5 3 16.5 10 Q16.5 14 19 16.5 H3 Q5.5 14 5.5 10 Q5.5 3 11 2 Z" fill="#f6c64a" stroke="#b8861e" stroke-width="1"/><path d="M7.5 10 Q7.5 5 10.5 4" fill="none" stroke="#fff3c0" stroke-width="1.4"/><circle cx="11" cy="18.5" r="2" fill="#e0a030" stroke="#b8861e" stroke-width="0.7"/></g></svg>
<div style="position:absolute;left:399px;top:165px;width:398px;height:720px;border:2px solid #d6d6d6;border-bottom-color:#cfcfcf;background:#fff;"></div>
<div style="position:absolute;left:399px;top:165px;width:376px;height:69px;background:#bdbdbd;"></div>
<div style="position:absolute;left:401px;top:167px;width:373px;height:1px;background:#dcdcdc;"></div>
<div style="position:absolute;left:401px;top:168px;width:373px;height:31px;background:#f5f5f5;"></div>
<div style="position:absolute;left:401px;top:199px;width:373px;height:1px;background:#b4b4b4;"></div>
<div style="position:absolute;left:555px;top:177px;font-size:13px;line-height:16px;color:#222;white-space:pre;letter-spacing:-0.126px;">1. Ukumbi mdogo</div>
<div style="position:absolute;left:401px;top:200px;width:122px;height:33px;background:#f5f5f5;"></div>
<div style="position:absolute;left:524px;top:200px;width:49px;height:33px;background:#f5f5f5;"></div>
<div style="position:absolute;left:574px;top:200px;width:49px;height:33px;background:#f5f5f5;"></div>
<div style="position:absolute;left:624px;top:200px;width:150px;height:33px;background:#f5f5f5;"></div>
<div style="position:absolute;left:399px;top:233px;width:376px;height:1px;background:#c6c6c6;"></div>
<div style="position:absolute;left:426.5px;top:210px;font-size:13px;line-height:16px;color:#222;white-space:pre;letter-spacing:0.575px;">Tarehe</div>
<svg style="left:501.5px;top:216px" width="11" height="6" viewBox="0 0 11 6"><path d="M0 5.5 H11 L5.5 0 Z" fill="#555"/></svg>
<div style="position:absolute;left:527px;top:210px;font-size:13px;line-height:16px;color:#222;white-space:pre;letter-spacing:0.325px;">Wakati</div>
<div style="position:absolute;left:582px;top:210px;font-size:13px;line-height:16px;color:#222;white-space:pre;letter-spacing:0.785px;">Watu</div>
<div style="position:absolute;left:697px;top:210px;font-size:13px;line-height:16px;color:#222;white-space:pre;letter-spacing:0.055px;">Rekodi</div>
<div style="position:absolute;left:400px;top:234px;width:375px;height:630px;overflow:hidden;border-right:1px solid #acacac;border-bottom:1px solid #acacac;">
<div style="position:absolute;left:0px;top:0px;width:34px;height:34px;background:#daf0ff;"></div>
<div style="position:absolute;left:34px;top:0px;width:340px;height:34px;background:#0080c4;"></div>
<svg style="left:8.3px;top:7.800000000000001px" width="17.4" height="17.4" viewBox="0 0 17.4 17.4"><circle cx="8.7" cy="8.7" r="7.2" fill="none" stroke="#333" stroke-width="1.25"/><path d="M5.7 5.7 L11.2 11.2 M6.7 11.5 H11.5 V6.7" fill="none" stroke="#333" stroke-width="1.25"/></svg>
<div style="position:absolute;left:33.8px;top:2px;font-size:13px;line-height:16px;color:#00e8ff;white-space:pre;letter-spacing:0.492px;">22.08.2024</div>
<div style="position:absolute;left:223.5px;top:2px;font-size:13px;line-height:16px;color:#00e8ff;white-space:pre;letter-spacing:-0.103px;">Alhamisi</div>
<div style="position:absolute;left:0px;top:34px;width:374px;height:60px;background:#ddf8e4;"></div>
<svg style="left:74px;top:54px" width="20" height="20" viewBox="0 0 20 20"><g filter="url(#fB)"><ellipse cx="9.2" cy="3.6" rx="1.7" ry="2" fill="#4a3a34"/><rect x="8" y="5.6" width="3" height="1.6" fill="#e0453f"/><rect x="8.3" y="7.2" width="2.4" height="2.6" fill="#e8a884"/><path d="M7.6 9.8 H11.3 L11.6 15 Q9.5 16 7.4 15 Z" fill="#f04a58"/><path d="M8.6 15.4 V18 M10.2 15.4 V18" stroke="#eac4b0" stroke-width="0.9"/><path d="M11 6 L12.6 2.6" stroke="#f0b0a0" stroke-width="0.9"/></g></svg>
<div style="position:absolute;left:124.1px;top:35px;font-size:13px;line-height:16px;color:#808080;white-space:pre;letter-spacing:0.331px;">07:00</div>
<div style="position:absolute;left:173.6px;top:35px;font-size:13px;line-height:16px;color:#808080;white-space:pre;letter-spacing:0.774px;">0/0</div>
<div style="position:absolute;left:223.5px;top:35px;font-size:13px;line-height:16px;color:#808080;white-space:pre;letter-spacing:0.056px;">Ngoma ya Barbie</div>
<div style="position:absolute;left:223.5px;top:51px;font-size:13px;line-height:16px;color:#808080;white-space:pre;letter-spacing:0.292px;">Mfanyakazi 1</div>
<div style="position:absolute;left:223.5px;top:67px;font-size:13px;line-height:16px;color:#808080;white-space:pre;letter-spacing:0.078px;">Kikundi: Children</div>
<div style="position:absolute;left:0px;top:94px;width:374px;height:60px;background:#daf0ff;"></div>
<svg style="left:74px;top:114px" width="20" height="20" viewBox="0 0 20 20"><g filter="url(#fB)"><ellipse cx="9.2" cy="3.6" rx="1.7" ry="2" fill="#4a3a34"/><rect x="8" y="5.6" width="3" height="1.6" fill="#e0453f"/><rect x="8.3" y="7.2" width="2.4" height="2.6" fill="#e8a884"/><path d="M7.6 9.8 H11.3 L11.6 15 Q9.5 16 7.4 15 Z" fill="#f04a58"/><path d="M8.6 15.4 V18 M10.2 15.4 V18" stroke="#eac4b0" stroke-width="0.9"/><path d="M11 6 L12.6 2.6" stroke="#f0b0a0" stroke-width="0.9"/></g></svg>
<div style="position:absolute;left:124.1px;top:95px;font-size:13px;line-height:16px;color:#808080;white-space:pre;letter-spacing:0.331px;">08:00</div>
<div style="position:absolute;left:173.6px;top:95px;font-size:13px;line-height:16px;color:#808080;white-space:pre;letter-spacing:0.774px;">0/0</div>
<div style="position:absolute;left:223.5px;top:95px;font-size:13px;line-height:16px;color:#808080;white-space:pre;letter-spacing:0.056px;">Ngoma ya Barbie</div>
<div style="position:absolute;left:223.5px;top:111px;font-size:13px;line-height:16px;color:#808080;white-space:pre;letter-spacing:0.292px;">Mfanyakazi 1</div>
<div style="position:absolute;left:223.5px;top:127px;font-size:13px;line-height:16px;color:#808080;white-space:pre;letter-spacing:0.078px;">Kikundi: Children</div>
<div style="position:absolute;left:0px;top:154px;width:374px;height:60px;background:#ddf8e4;"></div>
<div style="position:absolute;left:124px;top:154px;width:250px;height:60px;background:#ffffb0;"></div>
<svg style="left:74px;top:174px" width="20" height="20" viewBox="0 0 20 20"><g filter="url(#fB)"><ellipse cx="9.2" cy="3.6" rx="1.7" ry="2" fill="#4a3a34"/><rect x="8" y="5.6" width="3" height="1.6" fill="#e0453f"/><rect x="8.3" y="7.2" width="2.4" height="2.6" fill="#e8a884"/><path d="M7.6 9.8 H11.3 L11.6 15 Q9.5 16 7.4 15 Z" fill="#f04a58"/><path d="M8.6 15.4 V18 M10.2 15.4 V18" stroke="#eac4b0" stroke-width="0.9"/><path d="M11 6 L12.6 2.6" stroke="#f0b0a0" stroke-width="0.9"/></g></svg>
<div style="position:absolute;left:124.1px;top:155px;font-size:13px;line-height:16px;color:#000;white-space:pre;letter-spacing:0.331px;">09:00</div>
<div style="position:absolute;left:173.6px;top:155px;font-size:13px;line-height:16px;color:#000;white-space:pre;letter-spacing:0.774px;">0/1</div>
<div style="position:absolute;left:223.5px;top:155px;font-size:13px;line-height:16px;color:#000;white-space:pre;letter-spacing:0.056px;">Ngoma ya Barbie</div>
<div style="position:absolute;left:223.5px;top:171px;font-size:13px;line-height:16px;color:#000;white-space:pre;letter-spacing:0.292px;">Mfanyakazi 1</div>
<div style="position:absolute;left:223.5px;top:187px;font-size:13px;line-height:16px;color:#000;white-space:pre;letter-spacing:0.078px;">Kikundi: Children</div>
<div style="position:absolute;left:0px;top:214px;width:374px;height:20px;background:#daf0ff;"></div>
<div style="position:absolute;left:124px;top:214px;width:250px;height:20px;background:#ffffb0;"></div>
<svg style="left:74px;top:214px" width="20" height="20" viewBox="0 0 20 20"><g filter="url(#fB)" transform="translate(1.8,0.6) scale(0.94)"><path d="M6 17.5 L1 19" stroke="#8a8a8a" stroke-width="1.1"/><path d="M13.6 8 L14.2 2.6" stroke="#a8a8a8" stroke-width="1.6"/><circle cx="10.6" cy="3.2" r="1.6" fill="#3a3634"/><circle cx="7" cy="5.4" r="1.5" fill="#9a5a3a"/><path d="M11.2 5 L14.2 6 L14.6 18.6 H12.6 L12 12 L11 9 Z" fill="#2a2a2e"/><path d="M8 7 L11.2 6.4 L12.4 18.4 Q9 19.4 5.4 17.6 Q7.6 13 8 7 Z" fill="#e2302a"/><path d="M8.6 7 L10.4 6.8 L10 9.6 Z" fill="#f0b090"/><rect x="6" y="17.8" width="2.6" height="1.4" fill="#222"/><rect x="12.8" y="18" width="2.2" height="1.3" fill="#222"/></g></svg>
<div style="position:absolute;left:124.1px;top:215px;font-size:13px;line-height:16px;color:#000;white-space:pre;letter-spacing:0.331px;">10:00</div>
<div style="position:absolute;left:173.6px;top:215px;font-size:13px;line-height:16px;color:#000;white-space:pre;letter-spacing:0.774px;">0/1</div>
<div style="position:absolute;left:223.5px;top:215px;font-size:13px;line-height:16px;color:#000;white-space:pre;letter-spacing:0.039px;">Ngoma ya kisasa</div>
<div style="position:absolute;left:0px;top:234px;width:374px;height:20px;background:#ddf8e4;"></div>
<svg style="left:74px;top:234px" width="20" height="20" viewBox="0 0 20 20"><g filter="url(#fB)" transform="translate(1.8,0.6) scale(0.94)"><path d="M6 17.5 L1 19" stroke="#8a8a8a" stroke-width="1.1"/><path d="M13.6 8 L14.2 2.6" stroke="#a8a8a8" stroke-width="1.6"/><circle cx="10.6" cy="3.2" r="1.6" fill="#3a3634"/><circle cx="7" cy="5.4" r="1.5" fill="#9a5a3a"/><path d="M11.2 5 L14.2 6 L14.6 18.6 H12.6 L12 12 L11 9 Z" fill="#2a2a2e"/><path d="M8 7 L11.2 6.4 L12.4 18.4 Q9 19.4 5.4 17.6 Q7.6 13 8 7 Z" fill="#e2302a"/><path d="M8.6 7 L10.4 6.8 L10 9.6 Z" fill="#f0b090"/><rect x="6" y="17.8" width="2.6" height="1.4" fill="#222"/><rect x="12.8" y="18" width="2.2" height="1.3" fill="#222"/></g></svg>
<div style="position:absolute;left:124.1px;top:235px;font-size:13px;line-height:16px;color:#808080;white-space:pre;letter-spacing:0.524px;">11:00</div>
<div style="position:absolute;left:173.6px;top:235px;font-size:13px;line-height:16px;color:#808080;white-space:pre;letter-spacing:0.774px;">0/0</div>
<div style="position:absolute;left:223.5px;top:235px;font-size:13px;line-height:16px;color:#808080;white-space:pre;letter-spacing:0.039px;">Ngoma ya kisasa</div>
<div style="position:absolute;left:0px;top:254px;width:374px;height:20px;background:#daf0ff;"></div>
<svg style="left:74px;top:254px" width="20" height="20" viewBox="0 0 20 20"><g filter="url(#fB)" transform="translate(1.8,0.6) scale(0.94)"><path d="M6 17.5 L1 19" stroke="#8a8a8a" stroke-width="1.1"/><path d="M13.6 8 L14.2 2.6" stroke="#a8a8a8" stroke-width="1.6"/><circle cx="10.6" cy="3.2" r="1.6" fill="#3a3634"/><circle cx="7" cy="5.4" r="1.5" fill="#9a5a3a"/><path d="M11.2 5 L14.2 6 L14.6 18.6 H12.6 L12 12 L11 9 Z" fill="#2a2a2e"/><path d="M8 7 L11.2 6.4 L12.4 18.4 Q9 19.4 5.4 17.6 Q7.6 13 8 7 Z" fill="#e2302a"/><path d="M8.6 7 L10.4 6.8 L10 9.6 Z" fill="#f0b090"/><rect x="6" y="17.8" width="2.6" height="1.4" fill="#222"/><rect x="12.8" y="18" width="2.2" height="1.3" fill="#222"/></g></svg>
<div style="position:absolute;left:124.1px;top:255px;font-size:13px;line-height:16px;color:#808080;white-space:pre;letter-spacing:0.331px;">12:00</div>
<div style="position:absolute;left:173.6px;top:255px;font-size:13px;line-height:16px;color:#808080;white-space:pre;letter-spacing:0.774px;">0/0</div>
<div style="position:absolute;left:223.5px;top:255px;font-size:13px;line-height:16px;color:#808080;white-space:pre;letter-spacing:0.039px;">Ngoma ya kisasa</div>
<div style="position:absolute;left:0px;top:274px;width:374px;height:20px;background:#ddf8e4;"></div>
<svg style="left:74px;top:274px" width="20" height="20" viewBox="0 0 20 20"><g filter="url(#fB)" transform="translate(1.8,0.6) scale(0.94)"><path d="M6 17.5 L1 19" stroke="#8a8a8a" stroke-width="1.1"/><path d="M13.6 8 L14.2 2.6" stroke="#a8a8a8" stroke-width="1.6"/><circle cx="10.6" cy="3.2" r="1.6" fill="#3a3634"/><circle cx="7" cy="5.4" r="1.5" fill="#9a5a3a"/><path d="M11.2 5 L14.2 6 L14.6 18.6 H12.6 L12 12 L11 9 Z" fill="#2a2a2e"/><path d="M8 7 L11.2 6.4 L12.4 18.4 Q9 19.4 5.4 17.6 Q7.6 13 8 7 Z" fill="#e2302a"/><path d="M8.6 7 L10.4 6.8 L10 9.6 Z" fill="#f0b090"/><rect x="6" y="17.8" width="2.6" height="1.4" fill="#222"/><rect x="12.8" y="18" width="2.2" height="1.3" fill="#222"/></g></svg>
<div style="position:absolute;left:124.1px;top:275px;font-size:13px;line-height:16px;color:#808080;white-space:pre;letter-spacing:0.331px;">13:00</div>
<div style="position:absolute;left:173.6px;top:275px;font-size:13px;line-height:16px;color:#808080;white-space:pre;letter-spacing:0.774px;">0/0</div>
<div style="position:absolute;left:223.5px;top:275px;font-size:13px;line-height:16px;color:#808080;white-space:pre;letter-spacing:0.039px;">Ngoma ya kisasa</div>
<div style="position:absolute;left:0px;top:294px;width:374px;height:20px;background:#daf0ff;"></div>
<svg style="left:74px;top:294px" width="20" height="20" viewBox="0 0 20 20"><g filter="url(#fB)" transform="translate(1.8,0.6) scale(0.94)"><path d="M6 17.5 L1 19" stroke="#8a8a8a" stroke-width="1.1"/><path d="M13.6 8 L14.2 2.6" stroke="#a8a8a8" stroke-width="1.6"/><circle cx="10.6" cy="3.2" r="1.6" fill="#3a3634"/><circle cx="7" cy="5.4" r="1.5" fill="#9a5a3a"/><path d="M11.2 5 L14.2 6 L14.6 18.6 H12.6 L12 12 L11 9 Z" fill="#2a2a2e"/><path d="M8 7 L11.2 6.4 L12.4 18.4 Q9 19.4 5.4 17.6 Q7.6 13 8 7 Z" fill="#e2302a"/><path d="M8.6 7 L10.4 6.8 L10 9.6 Z" fill="#f0b090"/><rect x="6" y="17.8" width="2.6" height="1.4" fill="#222"/><rect x="12.8" y="18" width="2.2" height="1.3" fill="#222"/></g></svg>
<div style="position:absolute;left:124.1px;top:295px;font-size:13px;line-height:16px;color:#808080;white-space:pre;letter-spacing:0.331px;">14:00</div>
<div style="position:absolute;left:173.6px;top:295px;font-size:13px;line-height:16px;color:#808080;white-space:pre;letter-spacing:0.774px;">0/0</div>
<div style="position:absolute;left:223.5px;top:295px;font-size:13px;line-height:16px;color:#808080;white-space:pre;letter-spacing:0.039px;">Ngoma ya kisasa</div>
<div style="position:absolute;left:0px;top:314px;width:374px;height:40px;background:#ddf8e4;"></div>
<svg style="left:74px;top:324px" width="20" height="20" viewBox="0 0 20 20"><g filter="url(#fB)"><circle cx="5.8" cy="3.6" r="1.5" fill="#6a3030"/><path d="M5 5 L8 6 L9 10.6 L5.6 11 Z" fill="#8a3a3a"/><path d="M6 10.6 L9 10.4 L8.6 17.4 H6.4 Z" fill="#7a7a7e"/><rect x="5.8" y="17" width="3.4" height="1.6" fill="#555"/><path d="M5 9 L3 11" stroke="#7a8a7a" stroke-width="1.2"/><circle cx="11" cy="3.8" r="1.4" fill="#f0a84a"/><path d="M10 2.6 L11 1 L12.2 2.6 Z" fill="#2a9a5a"/><path d="M10.6 5.2 L12 5.2 L16.6 10.6 Q12.6 12 9.4 10.6 Z" fill="#22a052"/><path d="M8.4 6.4 L10.6 5.6" stroke="#f0b090" stroke-width="1"/></g></svg>
<div style="position:absolute;left:124.1px;top:315px;font-size:13px;line-height:16px;color:#808080;white-space:pre;letter-spacing:0.331px;">15:00</div>
<div style="position:absolute;left:173.6px;top:315px;font-size:13px;line-height:16px;color:#808080;white-space:pre;letter-spacing:0.774px;">0/0</div>
<div style="position:absolute;left:223.5px;top:315px;font-size:13px;line-height:16px;color:#808080;white-space:pre;letter-spacing:0.136px;">Densi inayojitokeza</div>
<div style="position:absolute;left:223.5px;top:331px;font-size:13px;line-height:16px;color:#808080;white-space:pre;letter-spacing:0.217px;">Mfanyakazi 5</div>
<div style="position:absolute;left:0px;top:354px;width:374px;height:40px;background:#daf0ff;"></div>
<svg style="left:74px;top:364px" width="20" height="20" viewBox="0 0 20 20"><g filter="url(#fB)"><circle cx="5.8" cy="3.6" r="1.5" fill="#6a3030"/><path d="M5 5 L8 6 L9 10.6 L5.6 11 Z" fill="#8a3a3a"/><path d="M6 10.6 L9 10.4 L8.6 17.4 H6.4 Z" fill="#7a7a7e"/><rect x="5.8" y="17" width="3.4" height="1.6" fill="#555"/><path d="M5 9 L3 11" stroke="#7a8a7a" stroke-width="1.2"/><circle cx="11" cy="3.8" r="1.4" fill="#f0a84a"/><path d="M10 2.6 L11 1 L12.2 2.6 Z" fill="#2a9a5a"/><path d="M10.6 5.2 L12 5.2 L16.6 10.6 Q12.6 12 9.4 10.6 Z" fill="#22a052"/><path d="M8.4 6.4 L10.6 5.6" stroke="#f0b090" stroke-width="1"/></g></svg>
<div style="position:absolute;left:124.1px;top:355px;font-size:13px;line-height:16px;color:#808080;white-space:pre;letter-spacing:0.331px;">16:00</div>
<div style="position:absolute;left:173.6px;top:355px;font-size:13px;line-height:16px;color:#808080;white-space:pre;letter-spacing:0.774px;">0/0</div>
<div style="position:absolute;left:223.5px;top:355px;font-size:13px;line-height:16px;color:#808080;white-space:pre;letter-spacing:0.136px;">Densi inayojitokeza</div>
<div style="position:absolute;left:223.5px;top:371px;font-size:13px;line-height:16px;color:#808080;white-space:pre;letter-spacing:0.217px;">Mfanyakazi 5</div>
<div style="position:absolute;left:0px;top:394px;width:374px;height:40px;background:#ddf8e4;"></div>
<svg style="left:74px;top:404px" width="20" height="20" viewBox="0 0 20 20"><g filter="url(#fB)"><circle cx="5.8" cy="3.6" r="1.5" fill="#6a3030"/><path d="M5 5 L8 6 L9 10.6 L5.6 11 Z" fill="#8a3a3a"/><path d="M6 10.6 L9 10.4 L8.6 17.4 H6.4 Z" fill="#7a7a7e"/><rect x="5.8" y="17" width="3.4" height="1.6" fill="#555"/><path d="M5 9 L3 11" stroke="#7a8a7a" stroke-width="1.2"/><circle cx="11" cy="3.8" r="1.4" fill="#f0a84a"/><path d="M10 2.6 L11 1 L12.2 2.6 Z" fill="#2a9a5a"/><path d="M10.6 5.2 L12 5.2 L16.6 10.6 Q12.6 12 9.4 10.6 Z" fill="#22a052"/><path d="M8.4 6.4 L10.6 5.6" stroke="#f0b090" stroke-width="1"/></g></svg>
<div style="position:absolute;left:124.1px;top:395px;font-size:13px;line-height:16px;color:#808080;white-space:pre;letter-spacing:0.331px;">17:00</div>
<div style="position:absolute;left:173.6px;top:395px;font-size:13px;line-height:16px;color:#808080;white-space:pre;letter-spacing:0.774px;">0/0</div>
<div style="position:absolute;left:223.5px;top:395px;font-size:13px;line-height:16px;color:#808080;white-space:pre;letter-spacing:0.136px;">Densi inayojitokeza</div>
<div style="position:absolute;left:223.5px;top:411px;font-size:13px;line-height:16px;color:#808080;white-space:pre;letter-spacing:0.217px;">Mfanyakazi 5</div>
<div style="position:absolute;left:0px;top:434px;width:374px;height:20px;background:#daf0ff;"></div>
<div style="position:absolute;left:124px;top:434px;width:250px;height:20px;background:#ffffb0;"></div>
<svg style="left:74px;top:434px" width="20" height="20" viewBox="0 0 20 20"><g filter="url(#fB)"><circle cx="5" cy="3.2" r="1.7" fill="#f6b488"/><path d="M2.2 6 L6.6 5.4 L9.2 1 L10 1.6 L7.4 7.4 L7 10.4 L1 10.6 Z" fill="#3aaa8a"/><path d="M3.4 10.4 L6.8 10.4 L9 17.6 H6.8 L5.2 12.6 L4.2 17.6 H2 Z" fill="#22405e"/><circle cx="15" cy="3.4" r="1.7" fill="#f6c098"/><path d="M10.4 1 L11.6 0.8 L13.4 5.4 H16.6 L18.6 0.8 L19.8 1.2 L17.4 7 L17 10.4 H13 L12.6 7 Z" fill="#dc4c34"/><path d="M13 10.2 H17 L18 17.6 H16 L15 12.4 L13 17.6 H10.8 Z" fill="#22405e"/></g></svg>
<div style="position:absolute;left:124.1px;top:435px;font-size:13px;line-height:16px;color:#000;white-space:pre;letter-spacing:0.331px;">18:00</div>
<div style="position:absolute;left:173.6px;top:435px;font-size:13px;line-height:16px;color:#000;white-space:pre;letter-spacing:0.774px;">0/1</div>
<div style="position:absolute;left:223.5px;top:435px;font-size:13px;line-height:16px;color:#000;white-space:pre;letter-spacing:0.013px;">Ngoma za Hip-hop</div>
<div style="position:absolute;left:0px;top:454px;width:374px;height:20px;background:#ddf8e4;"></div>
<svg style="left:74px;top:454px" width="20" height="20" viewBox="0 0 20 20"><g filter="url(#fB)"><circle cx="5" cy="3.2" r="1.7" fill="#f6b488"/><path d="M2.2 6 L6.6 5.4 L9.2 1 L10 1.6 L7.4 7.4 L7 10.4 L1 10.6 Z" fill="#3aaa8a"/><path d="M3.4 10.4 L6.8 10.4 L9 17.6 H6.8 L5.2 12.6 L4.2 17.6 H2 Z" fill="#22405e"/><circle cx="15" cy="3.4" r="1.7" fill="#f6c098"/><path d="M10.4 1 L11.6 0.8 L13.4 5.4 H16.6 L18.6 0.8 L19.8 1.2 L17.4 7 L17 10.4 H13 L12.6 7 Z" fill="#dc4c34"/><path d="M13 10.2 H17 L18 17.6 H16 L15 12.4 L13 17.6 H10.8 Z" fill="#22405e"/></g></svg>
<div style="position:absolute;left:124.1px;top:455px;font-size:13px;line-height:16px;color:#808080;white-space:pre;letter-spacing:0.331px;">19:00</div>
<div style="position:absolute;left:173.6px;top:455px;font-size:13px;line-height:16px;color:#808080;white-space:pre;letter-spacing:0.774px;">0/0</div>
<div style="position:absolute;left:223.5px;top:455px;font-size:13px;line-height:16px;color:#808080;white-space:pre;letter-spacing:0.013px;">Ngoma za Hip-hop</div>
<div style="position:absolute;left:0px;top:474px;width:374px;height:20px;background:#daf0ff;"></div>
<svg style="left:74px;top:474px" width="20" height="20" viewBox="0 0 20 20"><g filter="url(#fB)"><circle cx="5" cy="3.2" r="1.7" fill="#f6b488"/><path d="M2.2 6 L6.6 5.4 L9.2 1 L10 1.6 L7.4 7.4 L7 10.4 L1 10.6 Z" fill="#3aaa8a"/><path d="M3.4 10.4 L6.8 10.4 L9 17.6 H6.8 L5.2 12.6 L4.2 17.6 H2 Z" fill="#22405e"/><circle cx="15" cy="3.4" r="1.7" fill="#f6c098"/><path d="M10.4 1 L11.6 0.8 L13.4 5.4 H16.6 L18.6 0.8 L19.8 1.2 L17.4 7 L17 10.4 H13 L12.6 7 Z" fill="#dc4c34"/><path d="M13 10.2 H17 L18 17.6 H16 L15 12.4 L13 17.6 H10.8 Z" fill="#22405e"/></g></svg>
<div style="position:absolute;left:124.1px;top:475px;font-size:13px;line-height:16px;color:#808080;white-space:pre;letter-spacing:0.331px;">20:00</div>
<div style="position:absolute;left:173.6px;top:475px;font-size:13px;line-height:16px;color:#808080;white-space:pre;letter-spacing:0.774px;">0/0</div>
<div style="position:absolute;left:223.5px;top:475px;font-size:13px;line-height:16px;color:#808080;white-space:pre;letter-spacing:0.013px;">Ngoma za Hip-hop</div>
<div style="position:absolute;left:0px;top:494px;width:34px;height:34px;background:#ddf8e4;"></div>
<div style="position:absolute;left:34px;top:494px;width:340px;height:34px;background:#0080c4;"></div>
<svg style="left:8.3px;top:501.8px" width="17.4" height="17.4" viewBox="0 0 17.4 17.4"><circle cx="8.7" cy="8.7" r="7.2" fill="none" stroke="#333" stroke-width="1.25"/><path d="M5.7 5.7 L11.2 11.2 M6.7 11.5 H11.5 V6.7" fill="none" stroke="#333" stroke-width="1.25"/></svg>
<div style="position:absolute;left:33.8px;top:496px;font-size:13px;line-height:16px;color:#cfeaff;white-space:pre;letter-spacing:0.492px;">23.08.2024</div>
<div style="position:absolute;left:223.5px;top:496px;font-size:13px;line-height:16px;color:#cfeaff;white-space:pre;letter-spacing:0.328px;">Ijumaa</div>
<div style="position:absolute;left:0px;top:528px;width:374px;height:60px;background:#daf0ff;"></div>
<svg style="left:74px;top:548px" width="20" height="20" viewBox="0 0 20 20"><g filter="url(#fB)"><ellipse cx="9.2" cy="3.6" rx="1.7" ry="2" fill="#4a3a34"/><rect x="8" y="5.6" width="3" height="1.6" fill="#e0453f"/><rect x="8.3" y="7.2" width="2.4" height="2.6" fill="#e8a884"/><path d="M7.6 9.8 H11.3 L11.6 15 Q9.5 16 7.4 15 Z" fill="#f04a58"/><path d="M8.6 15.4 V18 M10.2 15.4 V18" stroke="#eac4b0" stroke-width="0.9"/><path d="M11 6 L12.6 2.6" stroke="#f0b0a0" stroke-width="0.9"/></g></svg>
<div style="position:absolute;left:124.1px;top:529px;font-size:13px;line-height:16px;color:#808080;white-space:pre;letter-spacing:0.331px;">07:00</div>
<div style="position:absolute;left:173.6px;top:529px;font-size:13px;line-height:16px;color:#808080;white-space:pre;letter-spacing:0.774px;">0/0</div>
<div style="position:absolute;left:223.5px;top:529px;font-size:13px;line-height:16px;color:#808080;white-space:pre;letter-spacing:0.056px;">Ngoma ya Barbie</div>
<div style="position:absolute;left:223.5px;top:545px;font-size:13px;line-height:16px;color:#808080;white-space:pre;letter-spacing:0.292px;">Mfanyakazi 1</div>
<div style="position:absolute;left:223.5px;top:561px;font-size:13px;line-height:16px;color:#808080;white-space:pre;letter-spacing:0.078px;">Kikundi: Children</div>
<div style="position:absolute;left:0px;top:588px;width:374px;height:60px;background:#ddf8e4;"></div>
<svg style="left:74px;top:608px" width="20" height="20" viewBox="0 0 20 20"><g filter="url(#fB)"><ellipse cx="9.2" cy="3.6" rx="1.7" ry="2" fill="#4a3a34"/><rect x="8" y="5.6" width="3" height="1.6" fill="#e0453f"/><rect x="8.3" y="7.2" width="2.4" height="2.6" fill="#e8a884"/><path d="M7.6 9.8 H11.3 L11.6 15 Q9.5 16 7.4 15 Z" fill="#f04a58"/><path d="M8.6 15.4 V18 M10.2 15.4 V18" stroke="#eac4b0" stroke-width="0.9"/><path d="M11 6 L12.6 2.6" stroke="#f0b0a0" stroke-width="0.9"/></g></svg>
<div style="position:absolute;left:124.1px;top:589px;font-size:13px;line-height:16px;color:#808080;white-space:pre;letter-spacing:0.331px;">08:00</div>
<div style="position:absolute;left:173.6px;top:589px;font-size:13px;line-height:16px;color:#808080;white-space:pre;letter-spacing:0.774px;">0/0</div>
<div style="position:absolute;left:223.5px;top:589px;font-size:13px;line-height:16px;color:#808080;white-space:pre;letter-spacing:0.056px;">Ngoma ya Barbie</div>
<div style="position:absolute;left:223.5px;top:605px;font-size:13px;line-height:16px;color:#808080;white-space:pre;letter-spacing:0.292px;">Mfanyakazi 1</div>
<div style="position:absolute;left:223.5px;top:621px;font-size:13px;line-height:16px;color:#808080;white-space:pre;letter-spacing:0.078px;">Kikundi: Children</div>
</div>
<svg style="left:782px;top:175px" width="7" height="4" viewBox="0 0 7 4"><path d="M0 4 H7 L3.5 0 Z" fill="#9a9a9a"/></svg>
<svg style="left:782px;top:850.5px" width="7" height="4" viewBox="0 0 7 4"><path d="M0 0 H7 L3.5 4 Z" fill="#777"/></svg>
<div style="position:absolute;left:780.5px;top:188px;width:9.5px;height:416px;background:#b9b9b9;"></div>
<svg style="left:409.5px;top:871px" width="4" height="7" viewBox="0 0 4 7"><path d="M4 0 V7 L0 3.5 Z" fill="#8a8a8a"/></svg>
<svg style="left:761.5px;top:871px" width="4" height="7" viewBox="0 0 4 7"><path d="M0 0 V7 L4 3.5 Z" fill="#8a8a8a"/></svg>
<div style="position:absolute;left:421.5px;top:869.5px;width:301.0px;height:9.5px;background:#b9b9b9;"></div>
<div style="position:absolute;left:804px;top:165px;width:398px;height:720px;border:2px solid #d6d6d6;border-bottom-color:#cfcfcf;background:#fff;"></div>
<div style="position:absolute;left:804px;top:165px;width:376px;height:69px;background:#bdbdbd;"></div>
<div style="position:absolute;left:806px;top:167px;width:373px;height:1px;background:#dcdcdc;"></div>
<div style="position:absolute;left:806px;top:168px;width:373px;height:31px;background:#f5f5f5;"></div>
<div style="position:absolute;left:806px;top:199px;width:373px;height:1px;background:#b4b4b4;"></div>
<div style="position:absolute;left:955.6px;top:177px;font-size:13px;line-height:16px;color:#222;white-space:pre;letter-spacing:-0.034px;">2. Ukumbi mkubwa</div>
<div style="position:absolute;left:806px;top:200px;width:122px;height:33px;background:#f5f5f5;"></div>
<div style="position:absolute;left:929px;top:200px;width:49px;height:33px;background:#f5f5f5;"></div>
<div style="position:absolute;left:979px;top:200px;width:49px;height:33px;background:#f5f5f5;"></div>
<div style="position:absolute;left:1029px;top:200px;width:150px;height:33px;background:#f5f5f5;"></div>
<div style="position:absolute;left:804px;top:233px;width:376px;height:1px;background:#c6c6c6;"></div>
<div style="position:absolute;left:831.5px;top:210px;font-size:13px;line-height:16px;color:#222;white-space:pre;letter-spacing:0.575px;">Tarehe</div>
<svg style="left:906.5px;top:216px" width="11" height="6" viewBox="0 0 11 6"><path d="M0 5.5 H11 L5.5 0 Z" fill="#555"/></svg>
<div style="position:absolute;left:932px;top:210px;font-size:13px;line-height:16px;color:#222;white-space:pre;letter-spacing:0.325px;">Wakati</div>
<div style="position:absolute;left:987px;top:210px;font-size:13px;line-height:16px;color:#222;white-space:pre;letter-spacing:0.785px;">Watu</div>
<div style="position:absolute;left:1102px;top:210px;font-size:13px;line-height:16px;color:#222;white-space:pre;letter-spacing:0.055px;">Rekodi</div>
<div style="position:absolute;left:805px;top:234px;width:375px;height:630px;overflow:hidden;border-right:1px solid #acacac;border-bottom:1px solid #acacac;">
<div style="position:absolute;left:0px;top:0px;width:34px;height:34px;background:#daf0ff;"></div>
<div style="position:absolute;left:34px;top:0px;width:340px;height:34px;background:#0080c4;"></div>
<svg style="left:8.3px;top:7.800000000000001px" width="17.4" height="17.4" viewBox="0 0 17.4 17.4"><circle cx="8.7" cy="8.7" r="7.2" fill="none" stroke="#333" stroke-width="1.25"/><path d="M5.7 5.7 L11.2 11.2 M6.7 11.5 H11.5 V6.7" fill="none" stroke="#333" stroke-width="1.25"/></svg>
<div style="position:absolute;left:33.8px;top:2px;font-size:13px;line-height:16px;color:#00e8ff;white-space:pre;letter-spacing:0.492px;">22.08.2024</div>
<div style="position:absolute;left:223.5px;top:2px;font-size:13px;line-height:16px;color:#00e8ff;white-space:pre;letter-spacing:-0.103px;">Alhamisi</div>
<div style="position:absolute;left:0px;top:34px;width:374px;height:20px;background:#ddf8e4;"></div>
<svg style="left:74px;top:34px" width="20" height="20" viewBox="0 0 20 20"><g filter="url(#fB)" transform="translate(0.8,0) scale(1.0)"><circle cx="11.6" cy="2.6" r="1.5" fill="#c89060"/><circle cx="8.4" cy="4.2" r="1.5" fill="#8a4a28"/><path d="M12.6 4.6 L17.6 3.6 L17.8 4.6 L13.8 6 Z" fill="#a8a8a8"/><path d="M12.4 5 L14.2 5.6 L14.6 16.8 H13 L12.2 10 Z" fill="#3a2e2e"/><path d="M9 6 L11.6 5.4 L12.4 8 L9.6 8.4 Z" fill="#f0b090"/><path d="M9.6 8 L12.6 7.4 L14 16.6 Q7 18 0.6 16.8 Q7 13 9.6 8 Z" fill="#1e9ae0"/><rect x="12" y="16.4" width="3.4" height="1.2" fill="#333"/></g></svg>
<div style="position:absolute;left:124.1px;top:35px;font-size:13px;line-height:16px;color:#808080;white-space:pre;letter-spacing:0.331px;">08:00</div>
<div style="position:absolute;left:173.6px;top:35px;font-size:13px;line-height:16px;color:#808080;white-space:pre;letter-spacing:0.774px;">0/0</div>
<div style="position:absolute;left:223.5px;top:35px;font-size:13px;line-height:16px;color:#808080;white-space:pre;letter-spacing:0.046px;">Ngoma ya Krump</div>
<div style="position:absolute;left:0px;top:54px;width:374px;height:20px;background:#daf0ff;"></div>
<svg style="left:74px;top:54px" width="20" height="20" viewBox="0 0 20 20"><g filter="url(#fB)" transform="translate(0.8,0) scale(1.0)"><circle cx="11.6" cy="2.6" r="1.5" fill="#c89060"/><circle cx="8.4" cy="4.2" r="1.5" fill="#8a4a28"/><path d="M12.6 4.6 L17.6 3.6 L17.8 4.6 L13.8 6 Z" fill="#a8a8a8"/><path d="M12.4 5 L14.2 5.6 L14.6 16.8 H13 L12.2 10 Z" fill="#3a2e2e"/><path d="M9 6 L11.6 5.4 L12.4 8 L9.6 8.4 Z" fill="#f0b090"/><path d="M9.6 8 L12.6 7.4 L14 16.6 Q7 18 0.6 16.8 Q7 13 9.6 8 Z" fill="#1e9ae0"/><rect x="12" y="16.4" width="3.4" height="1.2" fill="#333"/></g></svg>
<div style="position:absolute;left:124.1px;top:55px;font-size:13px;line-height:16px;color:#808080;white-space:pre;letter-spacing:0.331px;">09:00</div>
<div style="position:absolute;left:173.6px;top:55px;font-size:13px;line-height:16px;color:#808080;white-space:pre;letter-spacing:0.774px;">0/0</div>
<div style="position:absolute;left:223.5px;top:55px;font-size:13px;line-height:16px;color:#808080;white-space:pre;letter-spacing:0.046px;">Ngoma ya Krump</div>
<div style="position:absolute;left:0px;top:74px;width:374px;height:20px;background:#ddf8e4;"></div>
<div style="position:absolute;left:124px;top:74px;width:250px;height:20px;background:#ffffb0;"></div>
<svg style="left:74px;top:74px" width="20" height="20" viewBox="0 0 20 20"><g filter="url(#fB)" transform="translate(0.8,0) scale(1.0)"><circle cx="11.6" cy="2.6" r="1.5" fill="#c89060"/><circle cx="8.4" cy="4.2" r="1.5" fill="#8a4a28"/><path d="M12.6 4.6 L17.6 3.6 L17.8 4.6 L13.8 6 Z" fill="#a8a8a8"/><path d="M12.4 5 L14.2 5.6 L14.6 16.8 H13 L12.2 10 Z" fill="#3a2e2e"/><path d="M9 6 L11.6 5.4 L12.4 8 L9.6 8.4 Z" fill="#f0b090"/><path d="M9.6 8 L12.6 7.4 L14 16.6 Q7 18 0.6 16.8 Q7 13 9.6 8 Z" fill="#1e9ae0"/><rect x="12" y="16.4" width="3.4" height="1.2" fill="#333"/></g></svg>
<div style="position:absolute;left:124.1px;top:75px;font-size:13px;line-height:16px;color:#000;white-space:pre;letter-spacing:0.331px;">10:00</div>
<div style="position:absolute;left:173.6px;top:75px;font-size:13px;line-height:16px;color:#000;white-space:pre;letter-spacing:0.774px;">0/2</div>
<div style="position:absolute;left:223.5px;top:75px;font-size:13px;line-height:16px;color:#000;white-space:pre;letter-spacing:0.046px;">Ngoma ya Krump</div>
<div style="position:absolute;left:0px;top:94px;width:374px;height:20px;background:#daf0ff;"></div>
<svg style="left:74px;top:94px" width="20" height="20" viewBox="0 0 20 20"><g filter="url(#fB)" transform="translate(0.8,0) scale(1.0)"><circle cx="11.6" cy="2.6" r="1.5" fill="#c89060"/><circle cx="8.4" cy="4.2" r="1.5" fill="#8a4a28"/><path d="M12.6 4.6 L17.6 3.6 L17.8 4.6 L13.8 6 Z" fill="#a8a8a8"/><path d="M12.4 5 L14.2 5.6 L14.6 16.8 H13 L12.2 10 Z" fill="#3a2e2e"/><path d="M9 6 L11.6 5.4 L12.4 8 L9.6 8.4 Z" fill="#f0b090"/><path d="M9.6 8 L12.6 7.4 L14 16.6 Q7 18 0.6 16.8 Q7 13 9.6 8 Z" fill="#1e9ae0"/><rect x="12" y="16.4" width="3.4" height="1.2" fill="#333"/></g></svg>
<div style="position:absolute;left:124.1px;top:95px;font-size:13px;line-height:16px;color:#808080;white-space:pre;letter-spacing:0.524px;">11:00</div>
<div style="position:absolute;left:173.6px;top:95px;font-size:13px;line-height:16px;color:#808080;white-space:pre;letter-spacing:0.774px;">0/0</div>
<div style="position:absolute;left:223.5px;top:95px;font-size:13px;line-height:16px;color:#808080;white-space:pre;letter-spacing:0.046px;">Ngoma ya Krump</div>
<div style="position:absolute;left:0px;top:114px;width:374px;height:20px;background:#ddf8e4;"></div>
<svg style="left:74px;top:114px" width="20" height="20" viewBox="0 0 20 20"><g filter="url(#fB)" transform="translate(0.8,0) scale(1.0)"><circle cx="11.6" cy="2.6" r="1.5" fill="#c89060"/><circle cx="8.4" cy="4.2" r="1.5" fill="#8a4a28"/><path d="M12.6 4.6 L17.6 3.6 L17.8 4.6 L13.8 6 Z" fill="#a8a8a8"/><path d="M12.4 5 L14.2 5.6 L14.6 16.8 H13 L12.2 10 Z" fill="#3a2e2e"/><path d="M9 6 L11.6 5.4 L12.4 8 L9.6 8.4 Z" fill="#f0b090"/><path d="M9.6 8 L12.6 7.4 L14 16.6 Q7 18 0.6 16.8 Q7 13 9.6 8 Z" fill="#1e9ae0"/><rect x="12" y="16.4" width="3.4" height="1.2" fill="#333"/></g></svg>
<div style="position:absolute;left:124.1px;top:115px;font-size:13px;line-height:16px;color:#808080;white-space:pre;letter-spacing:0.331px;">12:00</div>
<div style="position:absolute;left:173.6px;top:115px;font-size:13px;line-height:16px;color:#808080;white-space:pre;letter-spacing:0.774px;">0/0</div>
<div style="position:absolute;left:223.5px;top:115px;font-size:13px;line-height:16px;color:#808080;white-space:pre;letter-spacing:0.046px;">Ngoma ya Krump</div>
<div style="position:absolute;left:0px;top:134px;width:374px;height:60px;background:#daf0ff;"></div>
<svg style="left:74px;top:154px" width="20" height="20" viewBox="0 0 20 20"><g filter="url(#fB)" transform="translate(0.4,1) scale(1.0)"><ellipse cx="6" cy="2.6" rx="2" ry="1.5" fill="#e02a2a" transform="rotate(-25 6 2.6)"/><path d="M6.6 4 L8.4 8" stroke="#f6d0c0" stroke-width="0.9"/><ellipse cx="9.8" cy="6.6" rx="1.1" ry="2.4" fill="#3a2a2a"/><circle cx="9.4" cy="5.2" r="1.1" fill="#c87a6a"/><path d="M7.6 7.4 L9.2 7.4 L10 11 L7.2 11 Z" fill="#e02a2a"/><path d="M7 10.6 L10 10.6 Q14 12.6 15.4 15 Q10 18.4 3.8 17 Q3.6 12.6 7 10.6 Z" fill="#dc1e24"/><path d="M4.4 14.6 Q9 16 14 14.4" stroke="#b81418" stroke-width="0.7" fill="none"/></g></svg>
<div style="position:absolute;left:124.1px;top:135px;font-size:13px;line-height:16px;color:#808080;white-space:pre;letter-spacing:0.331px;">13:00</div>
<div style="position:absolute;left:173.6px;top:135px;font-size:13px;line-height:16px;color:#808080;white-space:pre;letter-spacing:0.774px;">0/0</div>
<div style="position:absolute;left:223.5px;top:135px;font-size:13px;line-height:16px;color:#808080;white-space:pre;letter-spacing:0.132px;">Ngoma ya nyumba</div>
<div style="position:absolute;left:223.5px;top:151px;font-size:13px;line-height:16px;color:#808080;white-space:pre;letter-spacing:0.267px;">Mfanyakazi 2</div>
<div style="position:absolute;left:223.5px;top:167px;font-size:13px;line-height:16px;color:#808080;white-space:pre;letter-spacing:0.066px;">Kikundi: Children</div>
<div style="position:absolute;left:0px;top:194px;width:374px;height:60px;background:#ddf8e4;"></div>
<svg style="left:74px;top:214px" width="20" height="20" viewBox="0 0 20 20"><g filter="url(#fB)" transform="translate(0.4,1) scale(1.0)"><ellipse cx="6" cy="2.6" rx="2" ry="1.5" fill="#e02a2a" transform="rotate(-25 6 2.6)"/><path d="M6.6 4 L8.4 8" stroke="#f6d0c0" stroke-width="0.9"/><ellipse cx="9.8" cy="6.6" rx="1.1" ry="2.4" fill="#3a2a2a"/><circle cx="9.4" cy="5.2" r="1.1" fill="#c87a6a"/><path d="M7.6 7.4 L9.2 7.4 L10 11 L7.2 11 Z" fill="#e02a2a"/><path d="M7 10.6 L10 10.6 Q14 12.6 15.4 15 Q10 18.4 3.8 17 Q3.6 12.6 7 10.6 Z" fill="#dc1e24"/><path d="M4.4 14.6 Q9 16 14 14.4" stroke="#b81418" stroke-width="0.7" fill="none"/></g></svg>
<div style="position:absolute;left:124.1px;top:195px;font-size:13px;line-height:16px;color:#808080;white-space:pre;letter-spacing:0.331px;">14:00</div>
<div style="position:absolute;left:173.6px;top:195px;font-size:13px;line-height:16px;color:#808080;white-space:pre;letter-spacing:0.774px;">0/0</div>
<div style="position:absolute;left:223.5px;top:195px;font-size:13px;line-height:16px;color:#808080;white-space:pre;letter-spacing:0.132px;">Ngoma ya nyumba</div>
<div style="position:absolute;left:223.5px;top:211px;font-size:13px;line-height:16px;color:#808080;white-space:pre;letter-spacing:0.267px;">Mfanyakazi 2</div>
<div style="position:absolute;left:223.5px;top:227px;font-size:13px;line-height:16px;color:#808080;white-space:pre;letter-spacing:0.066px;">Kikundi: Children</div>
<div style="position:absolute;left:0px;top:254px;width:374px;height:60px;background:#daf0ff;"></div>
<div style="position:absolute;left:124px;top:254px;width:250px;height:60px;background:#ffffb0;"></div>
<svg style="left:74px;top:274px" width="20" height="20" viewBox="0 0 20 20"><g filter="url(#fB)" transform="translate(0.4,1) scale(1.0)"><ellipse cx="6" cy="2.6" rx="2" ry="1.5" fill="#e02a2a" transform="rotate(-25 6 2.6)"/><path d="M6.6 4 L8.4 8" stroke="#f6d0c0" stroke-width="0.9"/><ellipse cx="9.8" cy="6.6" rx="1.1" ry="2.4" fill="#3a2a2a"/><circle cx="9.4" cy="5.2" r="1.1" fill="#c87a6a"/><path d="M7.6 7.4 L9.2 7.4 L10 11 L7.2 11 Z" fill="#e02a2a"/><path d="M7 10.6 L10 10.6 Q14 12.6 15.4 15 Q10 18.4 3.8 17 Q3.6 12.6 7 10.6 Z" fill="#dc1e24"/><path d="M4.4 14.6 Q9 16 14 14.4" stroke="#b81418" stroke-width="0.7" fill="none"/></g></svg>
<div style="position:absolute;left:124.1px;top:255px;font-size:13px;line-height:16px;color:#c80000;white-space:pre;letter-spacing:0.331px;">15:00</div>
<div style="position:absolute;left:173.6px;top:255px;font-size:13px;line-height:16px;color:#c80000;white-space:pre;letter-spacing:0.774px;">0/1</div>
<div style="position:absolute;left:223.5px;top:255px;font-size:13px;line-height:16px;color:#c80000;white-space:pre;letter-spacing:0.132px;">Ngoma ya nyumba</div>
<div style="position:absolute;left:223.5px;top:271px;font-size:13px;line-height:16px;color:#c80000;white-space:pre;letter-spacing:0.267px;">Mfanyakazi 2</div>
<div style="position:absolute;left:223.5px;top:287px;font-size:13px;line-height:16px;color:#c80000;white-space:pre;letter-spacing:0.066px;">Kikundi: Children</div>
<div style="position:absolute;left:0px;top:314px;width:374px;height:60px;background:#ddf8e4;"></div>
<svg style="left:74px;top:334px" width="20" height="20" viewBox="0 0 20 20"><g filter="url(#fB)" transform="translate(0.4,1) scale(1.0)"><ellipse cx="6" cy="2.6" rx="2" ry="1.5" fill="#e02a2a" transform="rotate(-25 6 2.6)"/><path d="M6.6 4 L8.4 8" stroke="#f6d0c0" stroke-width="0.9"/><ellipse cx="9.8" cy="6.6" rx="1.1" ry="2.4" fill="#3a2a2a"/><circle cx="9.4" cy="5.2" r="1.1" fill="#c87a6a"/><path d="M7.6 7.4 L9.2 7.4 L10 11 L7.2 11 Z" fill="#e02a2a"/><path d="M7 10.6 L10 10.6 Q14 12.6 15.4 15 Q10 18.4 3.8 17 Q3.6 12.6 7 10.6 Z" fill="#dc1e24"/><path d="M4.4 14.6 Q9 16 14 14.4" stroke="#b81418" stroke-width="0.7" fill="none"/></g></svg>
<div style="position:absolute;left:124.1px;top:315px;font-size:13px;line-height:16px;color:#808080;white-space:pre;letter-spacing:0.331px;">16:00</div>
<div style="position:absolute;left:173.6px;top:315px;font-size:13px;line-height:16px;color:#808080;white-space:pre;letter-spacing:0.774px;">0/0</div>
<div style="position:absolute;left:223.5px;top:315px;font-size:13px;line-height:16px;color:#808080;white-space:pre;letter-spacing:0.132px;">Ngoma ya nyumba</div>
<div style="position:absolute;left:223.5px;top:331px;font-size:13px;line-height:16px;color:#808080;white-space:pre;letter-spacing:0.267px;">Mfanyakazi 2</div>
<div style="position:absolute;left:223.5px;top:347px;font-size:13px;line-height:16px;color:#808080;white-space:pre;letter-spacing:0.066px;">Kikundi: Children</div>
<div style="position:absolute;left:0px;top:374px;width:374px;height:60px;background:#daf0ff;"></div>
<svg style="left:74px;top:394px" width="20" height="20" viewBox="0 0 20 20"><g filter="url(#fB)" transform="translate(0.4,1) scale(1.0)"><ellipse cx="6" cy="2.6" rx="2" ry="1.5" fill="#e02a2a" transform="rotate(-25 6 2.6)"/><path d="M6.6 4 L8.4 8" stroke="#f6d0c0" stroke-width="0.9"/><ellipse cx="9.8" cy="6.6" rx="1.1" ry="2.4" fill="#3a2a2a"/><circle cx="9.4" cy="5.2" r="1.1" fill="#c87a6a"/><path d="M7.6 7.4 L9.2 7.4 L10 11 L7.2 11 Z" fill="#e02a2a"/><path d="M7 10.6 L10 10.6 Q14 12.6 15.4 15 Q10 18.4 3.8 17 Q3.6 12.6 7 10.6 Z" fill="#dc1e24"/><path d="M4.4 14.6 Q9 16 14 14.4" stroke="#b81418" stroke-width="0.7" fill="none"/></g></svg>
<div style="position:absolute;left:124.1px;top:375px;font-size:13px;line-height:16px;color:#808080;white-space:pre;letter-spacing:0.331px;">17:00</div>
<div style="position:absolute;left:173.6px;top:375px;font-size:13px;line-height:16px;color:#808080;white-space:pre;letter-spacing:0.774px;">0/0</div>
<div style="position:absolute;left:223.5px;top:375px;font-size:13px;line-height:16px;color:#808080;white-space:pre;letter-spacing:0.132px;">Ngoma ya nyumba</div>
<div style="position:absolute;left:223.5px;top:391px;font-size:13px;line-height:16px;color:#808080;white-space:pre;letter-spacing:0.267px;">Mfanyakazi 2</div>
<div style="position:absolute;left:223.5px;top:407px;font-size:13px;line-height:16px;color:#808080;white-space:pre;letter-spacing:0.066px;">Kikundi: Children</div>
<div style="position:absolute;left:0px;top:434px;width:374px;height:20px;background:#ddf8e4;"></div>
<div style="position:absolute;left:124px;top:434px;width:250px;height:20px;background:#ffffb0;"></div>
<svg style="left:74px;top:434px" width="20" height="20" viewBox="0 0 20 20"><g filter="url(#fB)"><path d="M1 2.6 L8.4 7.6 L8 9 L0.6 4 Z" fill="#6ab03a"/><path d="M19 3 L11.6 7.6 L12 9 L19.4 4.4 Z" fill="#6ab03a"/><circle cx="1.2" cy="2.8" r="1.2" fill="#f6c890"/><circle cx="18.8" cy="3.2" r="1.2" fill="#f6c890"/><ellipse cx="9.6" cy="2.6" rx="2" ry="2.4" fill="#ec5a3c"/><rect x="8.6" y="4.4" width="2" height="2.4" fill="#f6cc3c"/><path d="M6.4 7 L12.8 7 L13.4 12.4 H5.6 Z" fill="#f060a0"/><path d="M8.8 7 H10.6 L11 12.4 H8.2 Z" fill="#62c23c"/><path d="M4.2 12.4 H14.8 Q15.4 16 14.6 19.4 Q9.6 20.4 4.4 19.4 Q3.6 16 4.2 12.4 Z" fill="#c88a4a"/><rect x="4.4" y="13" width="2" height="6" fill="#f6b43c"/></g></svg>
<div style="position:absolute;left:124.1px;top:435px;font-size:13px;line-height:16px;color:#000;white-space:pre;letter-spacing:0.331px;">18:00</div>
<div style="position:absolute;left:173.6px;top:435px;font-size:13px;line-height:16px;color:#000;white-space:pre;letter-spacing:0.774px;">0/1</div>
<div style="position:absolute;left:223.5px;top:435px;font-size:13px;line-height:16px;color:#000;white-space:pre;letter-spacing:0.093px;">Ngoma ya kulegea</div>
<div style="position:absolute;left:0px;top:454px;width:374px;height:20px;background:#daf0ff;"></div>
<svg style="left:74px;top:454px" width="20" height="20" viewBox="0 0 20 20"><g filter="url(#fB)"><path d="M1 2.6 L8.4 7.6 L8 9 L0.6 4 Z" fill="#6ab03a"/><path d="M19 3 L11.6 7.6 L12 9 L19.4 4.4 Z" fill="#6ab03a"/><circle cx="1.2" cy="2.8" r="1.2" fill="#f6c890"/><circle cx="18.8" cy="3.2" r="1.2" fill="#f6c890"/><ellipse cx="9.6" cy="2.6" rx="2" ry="2.4" fill="#ec5a3c"/><rect x="8.6" y="4.4" width="2" height="2.4" fill="#f6cc3c"/><path d="M6.4 7 L12.8 7 L13.4 12.4 H5.6 Z" fill="#f060a0"/><path d="M8.8 7 H10.6 L11 12.4 H8.2 Z" fill="#62c23c"/><path d="M4.2 12.4 H14.8 Q15.4 16 14.6 19.4 Q9.6 20.4 4.4 19.4 Q3.6 16 4.2 12.4 Z" fill="#c88a4a"/><rect x="4.4" y="13" width="2" height="6" fill="#f6b43c"/></g></svg>
<div style="position:absolute;left:124.1px;top:455px;font-size:13px;line-height:16px;color:#808080;white-space:pre;letter-spacing:0.331px;">19:00</div>
<div style="position:absolute;left:173.6px;top:455px;font-size:13px;line-height:16px;color:#808080;white-space:pre;letter-spacing:0.774px;">0/0</div>
<div style="position:absolute;left:223.5px;top:455px;font-size:13px;line-height:16px;color:#808080;white-space:pre;letter-spacing:0.093px;">Ngoma ya kulegea</div>
<div style="position:absolute;left:0px;top:474px;width:374px;height:20px;background:#ddf8e4;"></div>
<svg style="left:74px;top:474px" width="20" height="20" viewBox="0 0 20 20"><g filter="url(#fB)"><path d="M1 2.6 L8.4 7.6 L8 9 L0.6 4 Z" fill="#6ab03a"/><path d="M19 3 L11.6 7.6 L12 9 L19.4 4.4 Z" fill="#6ab03a"/><circle cx="1.2" cy="2.8" r="1.2" fill="#f6c890"/><circle cx="18.8" cy="3.2" r="1.2" fill="#f6c890"/><ellipse cx="9.6" cy="2.6" rx="2" ry="2.4" fill="#ec5a3c"/><rect x="8.6" y="4.4" width="2" height="2.4" fill="#f6cc3c"/><path d="M6.4 7 L12.8 7 L13.4 12.4 H5.6 Z" fill="#f060a0"/><path d="M8.8 7 H10.6 L11 12.4 H8.2 Z" fill="#62c23c"/><path d="M4.2 12.4 H14.8 Q15.4 16 14.6 19.4 Q9.6 20.4 4.4 19.4 Q3.6 16 4.2 12.4 Z" fill="#c88a4a"/><rect x="4.4" y="13" width="2" height="6" fill="#f6b43c"/></g></svg>
<div style="position:absolute;left:124.1px;top:475px;font-size:13px;line-height:16px;color:#808080;white-space:pre;letter-spacing:0.331px;">20:00</div>
<div style="position:absolute;left:173.6px;top:475px;font-size:13px;line-height:16px;color:#808080;white-space:pre;letter-spacing:0.774px;">0/0</div>
<div style="position:absolute;left:223.5px;top:475px;font-size:13px;line-height:16px;color:#808080;white-space:pre;letter-spacing:0.093px;">Ngoma ya kulegea</div>
<div style="position:absolute;left:0px;top:494px;width:374px;height:20px;background:#daf0ff;"></div>
<svg style="left:74px;top:494px" width="20" height="20" viewBox="0 0 20 20"><g filter="url(#fB)"><path d="M1 2.6 L8.4 7.6 L8 9 L0.6 4 Z" fill="#6ab03a"/><path d="M19 3 L11.6 7.6 L12 9 L19.4 4.4 Z" fill="#6ab03a"/><circle cx="1.2" cy="2.8" r="1.2" fill="#f6c890"/><circle cx="18.8" cy="3.2" r="1.2" fill="#f6c890"/><ellipse cx="9.6" cy="2.6" rx="2" ry="2.4" fill="#ec5a3c"/><rect x="8.6" y="4.4" width="2" height="2.4" fill="#f6cc3c"/><path d="M6.4 7 L12.8 7 L13.4 12.4 H5.6 Z" fill="#f060a0"/><path d="M8.8 7 H10.6 L11 12.4 H8.2 Z" fill="#62c23c"/><path d="M4.2 12.4 H14.8 Q15.4 16 14.6 19.4 Q9.6 20.4 4.4 19.4 Q3.6 16 4.2 12.4 Z" fill="#c88a4a"/><rect x="4.4" y="13" width="2" height="6" fill="#f6b43c"/></g></svg>
<div style="position:absolute;left:124.1px;top:495px;font-size:13px;line-height:16px;color:#808080;white-space:pre;letter-spacing:0.331px;">21:00</div>
<div style="position:absolute;left:173.6px;top:495px;font-size:13px;line-height:16px;color:#808080;white-space:pre;letter-spacing:0.774px;">0/0</div>
<div style="position:absolute;left:223.5px;top:495px;font-size:13px;line-height:16px;color:#808080;white-space:pre;letter-spacing:0.093px;">Ngoma ya kulegea</div>
<div style="position:absolute;left:0px;top:514px;width:374px;height:20px;background:#ddf8e4;"></div>
<svg style="left:74px;top:514px" width="20" height="20" viewBox="0 0 20 20"><g filter="url(#fB)"><path d="M1 2.6 L8.4 7.6 L8 9 L0.6 4 Z" fill="#6ab03a"/><path d="M19 3 L11.6 7.6 L12 9 L19.4 4.4 Z" fill="#6ab03a"/><circle cx="1.2" cy="2.8" r="1.2" fill="#f6c890"/><circle cx="18.8" cy="3.2" r="1.2" fill="#f6c890"/><ellipse cx="9.6" cy="2.6" rx="2" ry="2.4" fill="#ec5a3c"/><rect x="8.6" y="4.4" width="2" height="2.4" fill="#f6cc3c"/><path d="M6.4 7 L12.8 7 L13.4 12.4 H5.6 Z" fill="#f060a0"/><path d="M8.8 7 H10.6 L11 12.4 H8.2 Z" fill="#62c23c"/><path d="M4.2 12.4 H14.8 Q15.4 16 14.6 19.4 Q9.6 20.4 4.4 19.4 Q3.6 16 4.2 12.4 Z" fill="#c88a4a"/><rect x="4.4" y="13" width="2" height="6" fill="#f6b43c"/></g></svg>
<div style="position:absolute;left:124.1px;top:515px;font-size:13px;line-height:16px;color:#808080;white-space:pre;letter-spacing:0.331px;">22:00</div>
<div style="position:absolute;left:173.6px;top:515px;font-size:13px;line-height:16px;color:#808080;white-space:pre;letter-spacing:0.774px;">0/0</div>
<div style="position:absolute;left:223.5px;top:515px;font-size:13px;line-height:16px;color:#808080;white-space:pre;letter-spacing:0.093px;">Ngoma ya kulegea</div>
<div style="position:absolute;left:0px;top:534px;width:34px;height:34px;background:#daf0ff;"></div>
<div style="position:absolute;left:34px;top:534px;width:340px;height:34px;background:#0080c4;"></div>
<svg style="left:8.3px;top:541.8px" width="17.4" height="17.4" viewBox="0 0 17.4 17.4"><circle cx="8.7" cy="8.7" r="7.2" fill="none" stroke="#333" stroke-width="1.25"/><path d="M5.7 5.7 L11.2 11.2 M6.7 11.5 H11.5 V6.7" fill="none" stroke="#333" stroke-width="1.25"/></svg>
<div style="position:absolute;left:33.8px;top:536px;font-size:13px;line-height:16px;color:#cfeaff;white-space:pre;letter-spacing:0.492px;">23.08.2024</div>
<div style="position:absolute;left:223.5px;top:536px;font-size:13px;line-height:16px;color:#cfeaff;white-space:pre;letter-spacing:0.328px;">Ijumaa</div>
<div style="position:absolute;left:0px;top:568px;width:374px;height:20px;background:#ddf8e4;"></div>
<svg style="left:74px;top:568px" width="20" height="20" viewBox="0 0 20 20"><g filter="url(#fB)" transform="translate(0.8,0) scale(1.0)"><circle cx="11.6" cy="2.6" r="1.5" fill="#c89060"/><circle cx="8.4" cy="4.2" r="1.5" fill="#8a4a28"/><path d="M12.6 4.6 L17.6 3.6 L17.8 4.6 L13.8 6 Z" fill="#a8a8a8"/><path d="M12.4 5 L14.2 5.6 L14.6 16.8 H13 L12.2 10 Z" fill="#3a2e2e"/><path d="M9 6 L11.6 5.4 L12.4 8 L9.6 8.4 Z" fill="#f0b090"/><path d="M9.6 8 L12.6 7.4 L14 16.6 Q7 18 0.6 16.8 Q7 13 9.6 8 Z" fill="#1e9ae0"/><rect x="12" y="16.4" width="3.4" height="1.2" fill="#333"/></g></svg>
<div style="position:absolute;left:124.1px;top:569px;font-size:13px;line-height:16px;color:#808080;white-space:pre;letter-spacing:0.331px;">08:00</div>
<div style="position:absolute;left:173.6px;top:569px;font-size:13px;line-height:16px;color:#808080;white-space:pre;letter-spacing:0.774px;">0/0</div>
<div style="position:absolute;left:223.5px;top:569px;font-size:13px;line-height:16px;color:#808080;white-space:pre;letter-spacing:0.046px;">Ngoma ya Krump</div>
<div style="position:absolute;left:0px;top:588px;width:374px;height:20px;background:#daf0ff;"></div>
<svg style="left:74px;top:588px" width="20" height="20" viewBox="0 0 20 20"><g filter="url(#fB)" transform="translate(0.8,0) scale(1.0)"><circle cx="11.6" cy="2.6" r="1.5" fill="#c89060"/><circle cx="8.4" cy="4.2" r="1.5" fill="#8a4a28"/><path d="M12.6 4.6 L17.6 3.6 L17.8 4.6 L13.8 6 Z" fill="#a8a8a8"/><path d="M12.4 5 L14.2 5.6 L14.6 16.8 H13 L12.2 10 Z" fill="#3a2e2e"/><path d="M9 6 L11.6 5.4 L12.4 8 L9.6 8.4 Z" fill="#f0b090"/><path d="M9.6 8 L12.6 7.4 L14 16.6 Q7 18 0.6 16.8 Q7 13 9.6 8 Z" fill="#1e9ae0"/><rect x="12" y="16.4" width="3.4" height="1.2" fill="#333"/></g></svg>
<div style="position:absolute;left:124.1px;top:589px;font-size:13px;line-height:16px;color:#808080;white-space:pre;letter-spacing:0.331px;">09:00</div>
<div style="position:absolute;left:173.6px;top:589px;font-size:13px;line-height:16px;color:#808080;white-space:pre;letter-spacing:0.774px;">0/0</div>
<div style="position:absolute;left:223.5px;top:589px;font-size:13px;line-height:16px;color:#808080;white-space:pre;letter-spacing:0.046px;">Ngoma ya Krump</div>
<div style="position:absolute;left:0px;top:608px;width:374px;height:20px;background:#ddf8e4;"></div>
<svg style="left:74px;top:608px" width="20" height="20" viewBox="0 0 20 20"><g filter="url(#fB)" transform="translate(0.8,0) scale(1.0)"><circle cx="11.6" cy="2.6" r="1.5" fill="#c89060"/><circle cx="8.4" cy="4.2" r="1.5" fill="#8a4a28"/><path d="M12.6 4.6 L17.6 3.6 L17.8 4.6 L13.8 6 Z" fill="#a8a8a8"/><path d="M12.4 5 L14.2 5.6 L14.6 16.8 H13 L12.2 10 Z" fill="#3a2e2e"/><path d="M9 6 L11.6 5.4 L12.4 8 L9.6 8.4 Z" fill="#f0b090"/><path d="M9.6 8 L12.6 7.4 L14 16.6 Q7 18 0.6 16.8 Q7 13 9.6 8 Z" fill="#1e9ae0"/><rect x="12" y="16.4" width="3.4" height="1.2" fill="#333"/></g></svg>
<div style="position:absolute;left:124.1px;top:609px;font-size:13px;line-height:16px;color:#808080;white-space:pre;letter-spacing:0.331px;">10:00</div>
<div style="position:absolute;left:173.6px;top:609px;font-size:13px;line-height:16px;color:#808080;white-space:pre;letter-spacing:0.774px;">0/0</div>
<div style="position:absolute;left:223.5px;top:609px;font-size:13px;line-height:16px;color:#808080;white-space:pre;letter-spacing:0.046px;">Ngoma ya Krump</div>
</div>
<svg style="left:1187px;top:175px" width="7" height="4" viewBox="0 0 7 4"><path d="M0 4 H7 L3.5 0 Z" fill="#9a9a9a"/></svg>
<svg style="left:1187px;top:850.5px" width="7" height="4" viewBox="0 0 7 4"><path d="M0 0 H7 L3.5 4 Z" fill="#777"/></svg>
<div style="position:absolute;left:1185.5px;top:188px;width:9.5px;height:385px;background:#b9b9b9;"></div>
<svg style="left:814.5px;top:871px" width="4" height="7" viewBox="0 0 4 7"><path d="M4 0 V7 L0 3.5 Z" fill="#8a8a8a"/></svg>
<svg style="left:1166.5px;top:871px" width="4" height="7" viewBox="0 0 4 7"><path d="M0 0 V7 L4 3.5 Z" fill="#8a8a8a"/></svg>
<div style="position:absolute;left:827px;top:869.5px;width:301px;height:9.5px;background:#b9b9b9;"></div>
<div style="position:absolute;left:22px;top:915px;width:1190px;height:2px;background:#d6d6d6;"></div>
<div style="position:absolute;left:167px;top:919px;width:1045px;height:2px;background:#d8d8d8;"></div>
<div style="position:absolute;left:22px;top:916px;width:146px;height:56px;border:1px solid #cfcfcf;border-top:none;border-bottom:3px solid #1e9cf0;background:#fff;"></div>
<svg style="left:40px;top:931px" width="31" height="27" viewBox="0 0 31 27"><rect x="0.75" y="0.75" width="29" height="25.5" rx="2.5" fill="#e9eefb" stroke="#5f7fc4" stroke-width="1.5"/><path d="M1.5 6.5 V3 Q1.5 1.5 3 1.5 H27.5 Q29 1.5 29 3 V6.5 Z" fill="#8fb0e6"/><rect x="24" y="2.5" width="2.6" height="2.2" fill="#e85050"/></svg>
<div style="position:absolute;left:82px;top:936px;font-size:13px;line-height:16px;color:#1e96e8;white-space:pre;letter-spacing:-0.096px;">Usajili</div>
<svg style="left:135.5px;top:939px" width="10" height="9" viewBox="0 0 10 9"><path d="M1 0.8 L9 8.2 M9 0.8 L1 8.2" stroke="#1e96e8" stroke-width="2" fill="none"/></svg>
<svg style="left:28.5px;top:974.5px" width="20" height="20" viewBox="0 0 20 20"><circle cx="10" cy="10" r="9.6" fill="#4a7fc0"/><circle cx="10" cy="5.3" r="1.7" fill="#fff"/><rect x="8.5" y="8" width="3" height="7.6" fill="#fff"/></svg>
<div style="position:absolute;left:70.5px;top:978px;font-size:13px;line-height:16px;color:#222;white-space:pre;letter-spacing:0.372px;">7.2.9059.10 Standard</div>
<div style="position:absolute;left:229px;top:976px;width:1px;height:18px;background:#c4c4c4;"></div>
<svg style="left:243.5px;top:975px" width="16" height="19" viewBox="0 0 16 19"><path d="M1 3.5 V15.5 Q1 18.3 8 18.3 Q15 18.3 15 15.5 V3.5 Z" fill="#f4b85a" stroke="#c8862a" stroke-width="1"/><ellipse cx="8" cy="3.5" rx="7" ry="2.8" fill="#fbdc9a" stroke="#c8862a" stroke-width="1"/><path d="M1 7.5 Q1 10.3 8 10.3 Q15 10.3 15 7.5 M1 11.5 Q1 14.3 8 14.3 Q15 14.3 15 11.5" fill="none" stroke="#c8862a" stroke-width="0.9"/><rect x="3" y="6" width="2.4" height="11" fill="#fff" opacity="0.45"/></svg>
<div style="position:absolute;left:281.7px;top:978px;font-size:13px;line-height:16px;color:#222;white-space:pre;letter-spacing:0.377px;">localhost (utf8)</div>
<div style="position:absolute;left:399px;top:976px;width:1px;height:18px;background:#c4c4c4;"></div>
<svg style="left:412px;top:976px" width="17.5" height="17.5" viewBox="0 0 18 18"><path d="M0.6 17 Q0.6 10.8 9 10.8 Q17.4 10.8 17.4 17 Q9 18.8 0.6 17 Z" fill="url(#gBodyG)" stroke="#5f8a2c" stroke-width="0.7"/><ellipse cx="9" cy="6.2" rx="4.6" ry="5.6" fill="#c47a3c"/><ellipse cx="9" cy="7.4" rx="3" ry="3.9" fill="url(#gHead)"/><path d="M5 5.4 Q6 1.4 9.4 1.6 Q13 1.8 13.4 5.6 Q11.4 3.6 9 4 Q6.4 4 5 5.4 Z" fill="#a8602a"/></svg>
<div style="position:absolute;left:451.4px;top:978px;font-size:13px;line-height:16px;color:#222;white-space:pre;letter-spacing:-0.038px;">NIKOLAY (MAIN)</div>
<div style="position:absolute;left:578px;top:976px;width:1px;height:18px;background:#c4c4c4;"></div>
<svg style="left:591.5px;top:975.5px" width="17" height="18" viewBox="0 0 17 18"><rect x="0.6" y="0.6" width="15.8" height="16.8" fill="#f4f6fc" stroke="#6f86c0" stroke-width="1.2"/><rect x="1.2" y="1.2" width="14.6" height="3.4" fill="#e8584a"/><text x="8.5" y="14.6" font-family='"Liberation Serif", serif' font-size="10.5" font-weight="bold" text-anchor="middle" fill="#3a4a7a">31</text></svg>
<div style="position:absolute;left:631.4px;top:978px;font-size:13px;line-height:16px;color:#222;white-space:pre;letter-spacing:0.532px;">22.08.2024</div>
<div style="position:absolute;left:727px;top:976px;width:1px;height:18px;background:#c4c4c4;"></div>
<div style="position:absolute;left:761.7px;top:978px;font-size:13px;line-height:16px;color:#222;white-space:pre;letter-spacing:0.591px;">00:00:00:002</div>
<div style="position:absolute;left:875px;top:976px;width:1px;height:18px;background:#c4c4c4;"></div>
<div style="position:absolute;left:889.9px;top:978px;font-size:13px;line-height:16px;color:#222;white-space:pre;letter-spacing:-0.115px;">Ngoma ya kisasa</div>
<div style="position:absolute;left:1181px;top:976px;width:1px;height:18px;background:#c4c4c4;"></div>
<div style="position:absolute;left:1206.5px;top:981.5px;width:2px;height:2px;background:#808080;"></div>
<div style="position:absolute;left:1201.5px;top:986.5px;width:2px;height:2px;background:#808080;"></div>
<div style="position:absolute;left:1206.5px;top:986.5px;width:2px;height:2px;background:#808080;"></div>
<div style="position:absolute;left:1196.5px;top:991.5px;width:2px;height:2px;background:#808080;"></div>
<div style="position:absolute;left:1201.5px;top:991.5px;width:2px;height:2px;background:#808080;"></div>
<div style="position:absolute;left:1206.5px;top:991.5px;width:2px;height:2px;background:#808080;"></div>
</body></html>
